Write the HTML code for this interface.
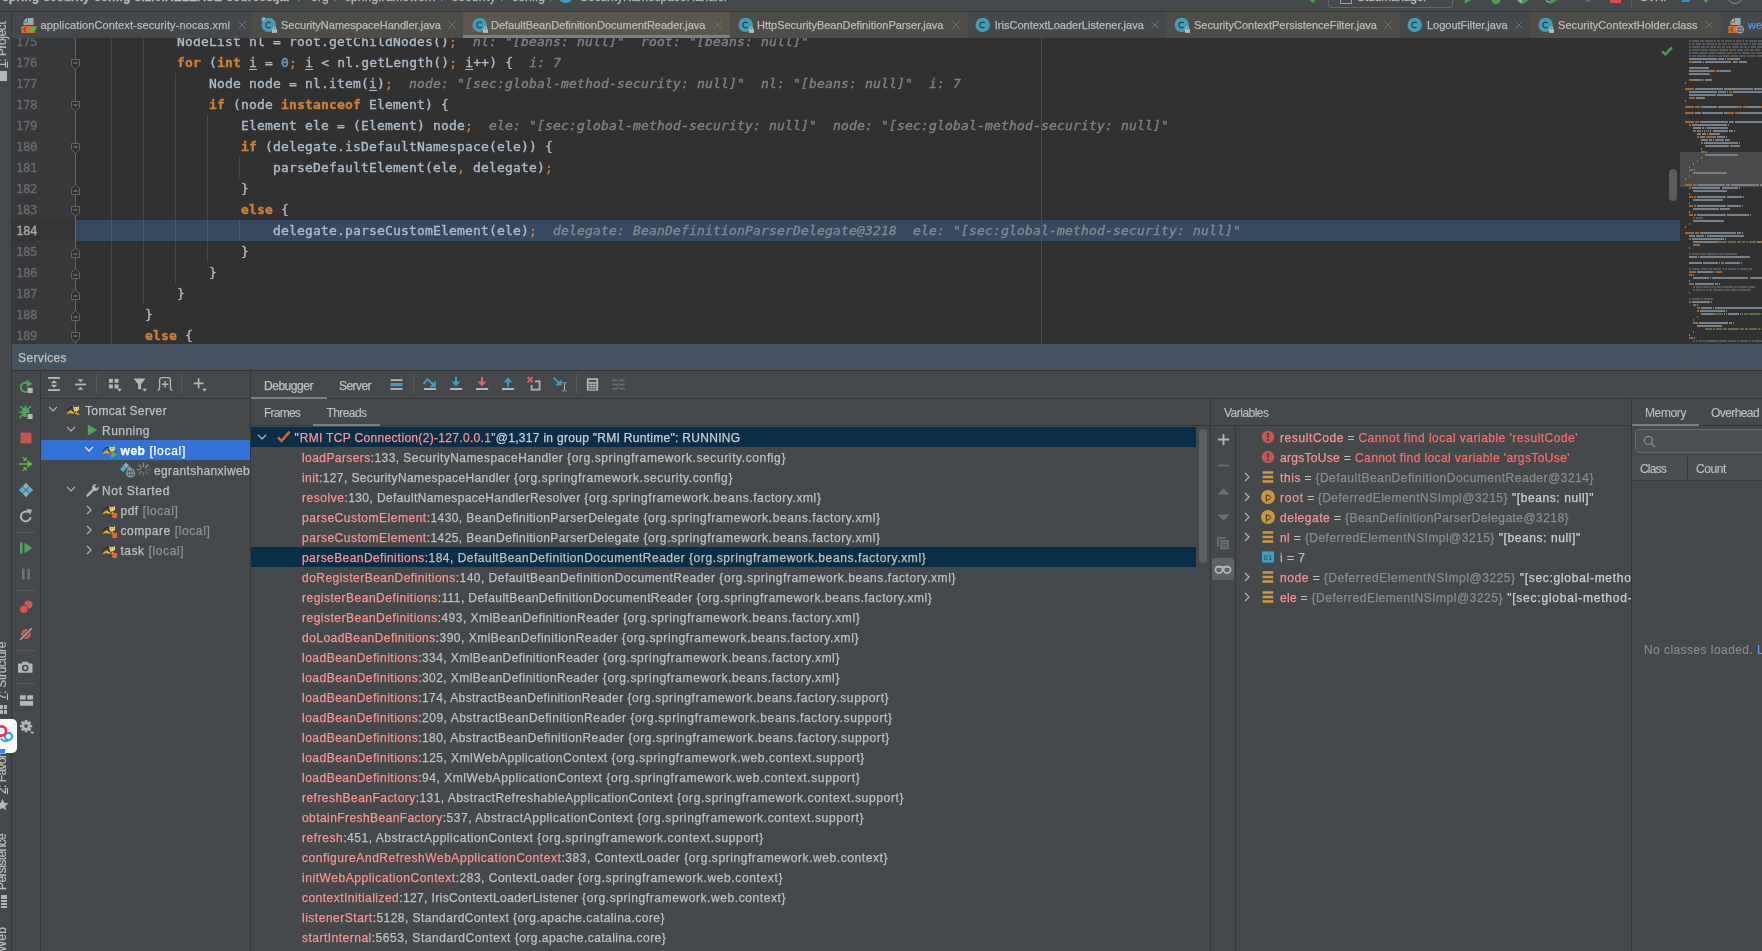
<!DOCTYPE html>
<html lang="en"><head><meta charset="utf-8"><title>IDE debugger</title>
<style>
html,body{margin:0;padding:0;background:#44484a;}
body{width:1762px;height:951px;overflow:hidden;font-family:'Liberation Sans', 'DejaVu Sans', sans-serif;font-size:12px;letter-spacing:0.45px;color:#c0c0c0;}
#root{filter:opacity(1);position:relative;width:1762px;height:951px;overflow:hidden;background:#44484a;}
.t{position:absolute;white-space:pre;-webkit-text-stroke:0.25px;}
.b{position:absolute;display:block;}
svg{overflow:visible;}
.clip{position:absolute;overflow:hidden;}
.cd{-webkit-text-stroke:0.35px;font-family:"DejaVu Sans Mono","Liberation Mono",monospace;font-size:13px;letter-spacing:0.174px;height:21px;line-height:21px;}

</style></head>
<body>
<div id="root">
<div class="b" style="left:0px;top:0px;width:1762px;height:11px;background:#44484a;"></div>
<div class="b" style="left:0px;top:11px;width:1762px;height:1px;background:#35383a;"></div>
<div class="clip" style="left:0;top:0;width:1762px;height:11px">
<div class="t" style="left:2px;top:-10px;font-size:12px;line-height:15px;color:#bbbbbb;font-weight:700;letter-spacing:0.075px;">spring-security-config-3.1.0.RELEASE-sources.jar</div>
<div class="t" style="left:298px;top:-10px;font-size:12px;line-height:15px;color:#8a8d8f;">/</div>
<div class="t" style="left:311px;top:-10px;font-size:12px;line-height:15px;color:#bbbbbb;letter-spacing:0.219px;">org</div>
<div class="t" style="left:334px;top:-10px;font-size:12px;line-height:15px;color:#8a8d8f;">/</div>
<div class="t" style="left:345px;top:-10px;font-size:12px;line-height:15px;color:#bbbbbb;letter-spacing:0.086px;">springframework</div>
<div class="t" style="left:441px;top:-10px;font-size:12px;line-height:15px;color:#8a8d8f;">/</div>
<div class="t" style="left:452px;top:-10px;font-size:12px;line-height:15px;color:#bbbbbb;letter-spacing:0.332px;">security</div>
<div class="t" style="left:501px;top:-10px;font-size:12px;line-height:15px;color:#8a8d8f;">/</div>
<div class="t" style="left:512px;top:-10px;font-size:12px;line-height:15px;color:#bbbbbb;letter-spacing:0.161px;">config</div>
<div class="t" style="left:550px;top:-10px;font-size:12px;line-height:15px;color:#8a8d8f;">/</div>
<div class="t" style="left:580px;top:-10px;font-size:12px;line-height:15px;color:#bbbbbb;letter-spacing:-0.059px;">SecurityNamespaceHandler</div>
<svg class="b" style="left:558px;top:-12px" width="16" height="16" viewBox="0 0 16 16"><circle cx="7.7" cy="7.9" r="7.2" fill="#459cb9"/><path d="M9.7 9.9A2.8 2.8 0 1 1 9.7 6.1" fill="none" stroke="#23424f" stroke-width="1.2"/></svg>
<div class="b" style="left:1328px;top:-16px;width:123px;height:22px;border:1px solid #646769;border-radius:3px"></div>
<div class="t" style="left:1357px;top:-10px;font-size:12px;line-height:15px;color:#bbbbbb;letter-spacing:-0.186px;">StudManager</div>
<div class="b" style="left:1340px;top:-9.5px;width:10px;height:10px;border:1px solid #9aa7b0;border-top:2px solid #4f9fcf"></div>
<svg class="b" style="left:1306px;top:-9.5px" width="14" height="12" viewBox="0 0 14 12"><path d="M1 5L7 10L13 1" fill="none" stroke="#499c54" stroke-width="3"/></svg>
<svg class="b" style="left:1462px;top:-9.5px" width="14" height="14" viewBox="0 0 16 16"><path d="M3.2 1.6L14 8L3.2 14.4Z" fill="#51a25c"/></svg>
<svg class="b" style="left:1487px;top:-9px" width="18" height="14" viewBox="0 0 16 16"><ellipse cx="8" cy="9" rx="5.5" ry="6" fill="#499c54"/></svg>
<svg class="b" style="left:1514px;top:-8.5px" width="20" height="14" viewBox="0 0 20 16"><path d="M1 2C1 10 5 13 8 13V2Z" fill="#9aa7b0"/><path d="M8 3L17 8.5L8 14Z" fill="#499c54"/></svg>
<svg class="b" style="left:1542px;top:-8.5px" width="20" height="14" viewBox="0 0 20 16"><path d="M8 12A5 5 0 0 1 3 7" fill="none" stroke="#9aa7b0" stroke-width="1.6"/><path d="M8 3L17 8.5L8 14Z" fill="#499c54"/></svg>
<svg class="b" style="left:1584px;top:-10px" width="14" height="14" viewBox="0 0 16 16"><path d="M3.2 1.6L14 8L3.2 14.4Z" fill="#6e7072"/></svg>
<div class="b" style="left:1610px;top:-6px;width:11px;height:9px;background:#c75450;"></div>
<div class="b" style="left:1631px;top:0px;width:1px;height:7px;background:#5a5d5f;"></div>
<div class="t" style="left:1640px;top:-10px;font-size:12px;line-height:15px;color:#bbbbbb;letter-spacing:-0.504px;">SVN:</div>
<svg class="b" style="left:1678px;top:-10px" width="12" height="12" viewBox="0 0 12 12"><path d="M1 1L11 11M11 11V4M11 11H4" stroke="#3592c4" stroke-width="2.2" fill="none"/></svg>
<svg class="b" style="left:1700px;top:-9.5px" width="14" height="12" viewBox="0 0 14 12"><path d="M1 5L6 10L13 1" fill="none" stroke="#499c54" stroke-width="2.6"/></svg>
<div class="b" style="left:1727px;top:-12px;width:14px;height:14px;border:1.5px solid #8a8d8f;border-radius:50%"></div>
</div>
<div class="b" style="left:0px;top:12px;width:11px;height:939px;background:#44484a;"></div>
<div class="b" style="left:11px;top:12px;width:1px;height:939px;background:#35383a;"></div>
<div class="clip" style="left:0;top:12px;width:11px;height:939px">
<div class="t" style="left:-5px;top:42px;font-size:12px;line-height:14px;height:14px;color:#bbbbbb;transform-origin:0 100%;transform:rotate(-90deg) translate(0,14px);letter-spacing:-0.47px;"><span style="text-decoration:underline">1</span>: Project</div>
<div class="b" style="left:-4px;top:59px;width:11px;height:10px;background:#b4b6b8;"></div>
<div class="t" style="left:-5px;top:674px;font-size:12px;line-height:14px;height:14px;color:#bbbbbb;transform-origin:0 100%;transform:rotate(-90deg) translate(0,14px);letter-spacing:-0.336px;"><span style="text-decoration:underline">7</span>: Structure</div>
<div class="b" style="left:0px;top:693px;width:3px;height:4px;background:#b4b6b8;"></div>
<div class="b" style="left:4px;top:693px;width:3px;height:4px;background:#b4b6b8;"></div>
<div class="b" style="left:0px;top:698px;width:3px;height:4px;background:#b4b6b8;"></div>
<div class="b" style="left:4px;top:698px;width:3px;height:4px;background:#b4b6b8;"></div>
<div class="t" style="left:-5px;top:768px;font-size:12px;line-height:14px;height:14px;color:#bbbbbb;transform-origin:0 100%;transform:rotate(-90deg) translate(0,14px);letter-spacing:-0.559px;"><span style="text-decoration:underline">2</span>: Favorites</div>
<svg class="b" style="left:-4px;top:786px" width="13" height="13" viewBox="0 0 16 16"><path d="M8 1L10.1 5.9L15.4 6.4L11.4 9.9L12.6 15L8 12.3L3.4 15L4.6 9.9L0.6 6.4L5.9 5.9Z" fill="#b4b6b8"/></svg>
<div class="t" style="left:-5px;top:864px;font-size:12px;line-height:14px;height:14px;color:#bbbbbb;transform-origin:0 100%;transform:rotate(-90deg) translate(0,14px);letter-spacing:-0.609px;">Persistence</div>
<div class="b" style="left:1px;top:883px;width:6px;height:4px;background:#b4b6b8;"></div>
<div class="b" style="left:1px;top:888px;width:6px;height:2px;background:#b4b6b8;"></div>
<div class="b" style="left:1px;top:891px;width:6px;height:2px;background:#b4b6b8;"></div>
<div class="b" style="left:1px;top:894px;width:6px;height:2px;background:#b4b6b8;"></div>
<div class="t" style="left:-5px;top:926px;font-size:12px;line-height:14px;height:14px;color:#bbbbbb;transform-origin:0 100%;transform:rotate(-90deg) translate(0,14px);letter-spacing:0.177px;">Web</div>
</div>
<div class="b" style="left:-6px;top:719px;width:22.6px;height:34px;background:#ffffff;border-radius:5px"></div><div class="b" style="left:0;top:749px;width:5px;height:4px;background:#2a8cf0"></div>
<svg class="b" style="left:-8px;top:722px" width="24" height="28" viewBox="0 0 24 28"><circle cx="16.5" cy="14.5" r="3.6" fill="none" stroke="#2aa5f5" stroke-width="2.2"/><circle cx="9.5" cy="9" r="4.6" fill="none" stroke="#ee2f52" stroke-width="2.6"/><path d="M9 16.5C11 20 15 19.5 16.5 18" fill="none" stroke="#2aa5f5" stroke-width="2.2"/></svg>
<div class="b" style="left:12px;top:12px;width:240px;height:26px;background:#44484a;"></div>
<svg class="b" style="left:20.5px;top:17px;" width="16" height="16" viewBox="0 0 16 16"><path d="M6.4 1H12.6V8H2.4V5Z" fill="#9aa7b0"/><path d="M2.2 4.8L6.2 0.8V4.8Z" fill="#b4c0c8"/><path d="M2.4 5H6.4V1" fill="none" stroke="#44484a" stroke-width="0.7"/><rect x="0.4" y="9" width="13.2" height="7" fill="#dd6b2b"/><path d="M5 10.3L2.6 12.5L5 14.7" fill="none" stroke="#3a2416" stroke-width="0.9"/><path d="M7.8 15.1C6.8 12 9.6 9.6 15.6 9.3C16 13.2 12.8 16.3 7.8 15.1Z" fill="#5fae45"/></svg>
<div class="t" style="left:40.6px;top:17.0px;height:16px;line-height:16px;font-size:11px;color:#bbbbbb;letter-spacing:0.112px;">applicationContext-security-nocas.xml</div>
<svg class="b" style="left:233.5px;top:17px;" width="16" height="16" viewBox="0 0 16 16"><path d="M4.2 4.2L11.8 11.8M11.8 4.2L4.2 11.8" stroke="#6e7275" stroke-width="1" fill="none"/></svg>
<div class="b" style="left:252px;top:12px;width:211px;height:26px;background:#4e4c49;"></div>
<svg class="b" style="left:260.5px;top:17px;" width="16" height="16" viewBox="0 0 16 16"><circle cx="7.7" cy="7.9" r="7.2" fill="#459cb9"/><path d="M9.7 9.9A2.8 2.8 0 1 1 9.7 6.1" fill="none" stroke="#23424f" stroke-width="1.2"/><path d="M-0.2 2.6L2.8 -0.2L5 1.8L2 4.8Z" fill="#9aa7b0"/><path d="M3.6 3.4L5.6 5.2" stroke="#9aa7b0" stroke-width="0.8"/><rect x="10.6" y="11.9" width="5.8" height="4.6" fill="#44484a" opacity="0.0"/><rect x="11" y="12.3" width="5" height="3.6" fill="#b4bcc2"/><path d="M12.3 12.5V10.9a1.2 1.2 0 0 1 2.4 0v1.6" fill="none" stroke="#b4bcc2" stroke-width="1"/></svg>
<div class="t" style="left:281px;top:17.0px;height:16px;line-height:16px;font-size:11px;color:#bbbbbb;letter-spacing:0.014px;">SecurityNamespaceHandler.java</div>
<svg class="b" style="left:444.0px;top:17px;" width="16" height="16" viewBox="0 0 16 16"><path d="M4.2 4.2L11.8 11.8M11.8 4.2L4.2 11.8" stroke="#6e7275" stroke-width="1" fill="none"/></svg>
<div class="b" style="left:463px;top:12px;width:267px;height:26px;background:#5b574d;"></div>
<svg class="b" style="left:471.5px;top:17px;" width="16" height="16" viewBox="0 0 16 16"><circle cx="7.7" cy="7.9" r="7.2" fill="#459cb9"/><path d="M9.7 9.9A2.8 2.8 0 1 1 9.7 6.1" fill="none" stroke="#23424f" stroke-width="1.2"/><rect x="10.6" y="11.9" width="5.8" height="4.6" fill="#44484a" opacity="0.0"/><rect x="11" y="12.3" width="5" height="3.6" fill="#b4bcc2"/><path d="M12.3 12.5V10.9a1.2 1.2 0 0 1 2.4 0v1.6" fill="none" stroke="#b4bcc2" stroke-width="1"/></svg>
<div class="t" style="left:491px;top:17.0px;height:16px;line-height:16px;font-size:11px;color:#bbbbbb;letter-spacing:-0.021px;">DefaultBeanDefinitionDocumentReader.java</div>
<svg class="b" style="left:710.0px;top:17px;" width="16" height="16" viewBox="0 0 16 16"><path d="M4.2 4.2L11.8 11.8M11.8 4.2L4.2 11.8" stroke="#6e7275" stroke-width="1" fill="none"/></svg>
<div class="b" style="left:730px;top:12px;width:238px;height:26px;background:#4e4c49;"></div>
<svg class="b" style="left:737.5px;top:17px;" width="16" height="16" viewBox="0 0 16 16"><circle cx="7.7" cy="7.9" r="7.2" fill="#459cb9"/><path d="M9.7 9.9A2.8 2.8 0 1 1 9.7 6.1" fill="none" stroke="#23424f" stroke-width="1.2"/><rect x="10.6" y="11.9" width="5.8" height="4.6" fill="#44484a" opacity="0.0"/><rect x="11" y="12.3" width="5" height="3.6" fill="#b4bcc2"/><path d="M12.3 12.5V10.9a1.2 1.2 0 0 1 2.4 0v1.6" fill="none" stroke="#b4bcc2" stroke-width="1"/></svg>
<div class="t" style="left:757px;top:17.0px;height:16px;line-height:16px;font-size:11px;color:#bbbbbb;letter-spacing:-0.002px;">HttpSecurityBeanDefinitionParser.java</div>
<svg class="b" style="left:947.5px;top:17px;" width="16" height="16" viewBox="0 0 16 16"><path d="M4.2 4.2L11.8 11.8M11.8 4.2L4.2 11.8" stroke="#6e7275" stroke-width="1" fill="none"/></svg>
<div class="b" style="left:968px;top:12px;width:198px;height:26px;background:#44484a;"></div>
<svg class="b" style="left:974.5px;top:17px;" width="16" height="16" viewBox="0 0 16 16"><circle cx="7.7" cy="7.9" r="7.2" fill="#459cb9"/><path d="M9.7 9.9A2.8 2.8 0 1 1 9.7 6.1" fill="none" stroke="#23424f" stroke-width="1.2"/></svg>
<div class="t" style="left:994.8px;top:17.0px;height:16px;line-height:16px;font-size:11px;color:#bbbbbb;letter-spacing:0.014px;">IrisContextLoaderListener.java</div>
<svg class="b" style="left:1146.8px;top:17px;" width="16" height="16" viewBox="0 0 16 16"><path d="M4.2 4.2L11.8 11.8M11.8 4.2L4.2 11.8" stroke="#6e7275" stroke-width="1" fill="none"/></svg>
<div class="b" style="left:1166px;top:12px;width:234px;height:26px;background:#4e4c49;"></div>
<svg class="b" style="left:1174.0px;top:17px;" width="16" height="16" viewBox="0 0 16 16"><circle cx="7.7" cy="7.9" r="7.2" fill="#459cb9"/><path d="M9.7 9.9A2.8 2.8 0 1 1 9.7 6.1" fill="none" stroke="#23424f" stroke-width="1.2"/><rect x="10.6" y="11.9" width="5.8" height="4.6" fill="#44484a" opacity="0.0"/><rect x="11" y="12.3" width="5" height="3.6" fill="#b4bcc2"/><path d="M12.3 12.5V10.9a1.2 1.2 0 0 1 2.4 0v1.6" fill="none" stroke="#b4bcc2" stroke-width="1"/></svg>
<div class="t" style="left:1194px;top:17.0px;height:16px;line-height:16px;font-size:11px;color:#bbbbbb;letter-spacing:0.022px;">SecurityContextPersistenceFilter.java</div>
<svg class="b" style="left:1379.5px;top:17px;" width="16" height="16" viewBox="0 0 16 16"><path d="M4.2 4.2L11.8 11.8M11.8 4.2L4.2 11.8" stroke="#6e7275" stroke-width="1" fill="none"/></svg>
<div class="b" style="left:1400px;top:12px;width:130px;height:26px;background:#44484a;"></div>
<svg class="b" style="left:1407.0px;top:17px;" width="16" height="16" viewBox="0 0 16 16"><circle cx="7.7" cy="7.9" r="7.2" fill="#459cb9"/><path d="M9.7 9.9A2.8 2.8 0 1 1 9.7 6.1" fill="none" stroke="#23424f" stroke-width="1.2"/></svg>
<div class="t" style="left:1427px;top:17.0px;height:16px;line-height:16px;font-size:11px;color:#bbbbbb;letter-spacing:-0.013px;">LogoutFilter.java</div>
<svg class="b" style="left:1510.5px;top:17px;" width="16" height="16" viewBox="0 0 16 16"><path d="M4.2 4.2L11.8 11.8M11.8 4.2L4.2 11.8" stroke="#6e7275" stroke-width="1" fill="none"/></svg>
<div class="b" style="left:1530px;top:12px;width:191px;height:26px;background:#4e4c49;"></div>
<svg class="b" style="left:1538.0px;top:17px;" width="16" height="16" viewBox="0 0 16 16"><circle cx="7.7" cy="7.9" r="7.2" fill="#459cb9"/><path d="M9.7 9.9A2.8 2.8 0 1 1 9.7 6.1" fill="none" stroke="#23424f" stroke-width="1.2"/><rect x="10.6" y="11.9" width="5.8" height="4.6" fill="#44484a" opacity="0.0"/><rect x="11" y="12.3" width="5" height="3.6" fill="#b4bcc2"/><path d="M12.3 12.5V10.9a1.2 1.2 0 0 1 2.4 0v1.6" fill="none" stroke="#b4bcc2" stroke-width="1"/></svg>
<div class="t" style="left:1558px;top:17.0px;height:16px;line-height:16px;font-size:11px;color:#bbbbbb;letter-spacing:0.075px;">SecurityContextHolder.class</div>
<svg class="b" style="left:1700.5px;top:17px;" width="16" height="16" viewBox="0 0 16 16"><path d="M4.2 4.2L11.8 11.8M11.8 4.2L4.2 11.8" stroke="#6e7275" stroke-width="1" fill="none"/></svg>
<div class="b" style="left:1721px;top:12px;width:41px;height:26px;background:#44484a;"></div>
<svg class="b" style="left:1728.0px;top:17px;" width="16" height="16" viewBox="0 0 16 16"><path d="M6.4 1H12.6V8H2.4V5Z" fill="#9aa7b0"/><path d="M2.2 4.8L6.2 0.8V4.8Z" fill="#b4c0c8"/><path d="M2.4 5H6.4V1" fill="none" stroke="#44484a" stroke-width="0.7"/><rect x="0.4" y="9" width="10" height="7" fill="#dd6b2b"/><path d="M5 10.3L2.6 12.5L5 14.7" fill="none" stroke="#3a2416" stroke-width="0.9"/><circle cx="12" cy="12.5" r="3.4" fill="#44484a" stroke="#9aa7b0" stroke-width="1.1"/><path d="M8.8 12.5H15.2M12 9.3C10.4 11 10.4 14 12 15.7C13.6 14 13.6 11 12 9.3" stroke="#9aa7b0" stroke-width="0.8" fill="none"/></svg>
<div class="t" style="left:1748px;top:17.0px;height:16px;line-height:16px;font-size:11px;color:#5394ec;letter-spacing:-0.049px;">web.xml</div>
<div class="b" style="left:463px;top:35px;width:267px;height:3px;background:#7a8084;"></div>
<div class="clip" style="left:12px;top:38px;width:1750px;height:306px;background:#313131">
<div class="b" style="left:0px;top:0px;width:63px;height:306px;background:#37393b"></div>
<div class="b" style="left:64px;top:182px;width:1604px;height:21px;background:#374961"></div>
<div class="b" style="left:0px;top:182px;width:63px;height:21px;background:#353535"></div>
<div class="b" style="left:1029px;top:0px;width:1px;height:306px;background:#4c4c4c"></div>
<div class="b" style="left:63px;top:0px;width:1px;height:306px;background:#646769"></div>
<div class="b" style="left:99px;top:-28px;width:1px;height:357px;background:#45484a"></div>
<div class="b" style="left:131px;top:-28px;width:1px;height:294px;background:#45484a"></div>
<div class="b" style="left:163px;top:35px;width:1px;height:210px;background:#45484a"></div>
<div class="b" style="left:195px;top:77px;width:1px;height:147px;background:#45484a"></div>
<div class="b" style="left:227px;top:119px;width:1px;height:21px;background:#45484a"></div>
<div class="b" style="left:227px;top:182px;width:1px;height:21px;background:#45484a"></div>
<div class="b" style="left:99px;top:182px;width:1px;height:21px;background:#4a5a73"></div>
<div class="b" style="left:131px;top:182px;width:1px;height:21px;background:#4a5a73"></div>
<div class="b" style="left:163px;top:182px;width:1px;height:21px;background:#4a5a73"></div>
<div class="b" style="left:195px;top:182px;width:1px;height:21px;background:#4a5a73"></div>
<div class="b" style="left:227px;top:182px;width:1px;height:21px;background:#4a5a73"></div>
<div class="t" style="left:3px;top:-6.7px;width:22px;text-align:right;height:21px;line-height:21px;font-family:'DejaVu Sans Mono', 'Liberation Mono', monospace;font-size:12.5px;letter-spacing:-0.55px;-webkit-text-stroke:0.3px;color:#686b6e">175</div>
<div class="t" style="left:3px;top:14.3px;width:22px;text-align:right;height:21px;line-height:21px;font-family:'DejaVu Sans Mono', 'Liberation Mono', monospace;font-size:12.5px;letter-spacing:-0.55px;-webkit-text-stroke:0.3px;color:#686b6e">176</div>
<div class="t" style="left:3px;top:35.3px;width:22px;text-align:right;height:21px;line-height:21px;font-family:'DejaVu Sans Mono', 'Liberation Mono', monospace;font-size:12.5px;letter-spacing:-0.55px;-webkit-text-stroke:0.3px;color:#686b6e">177</div>
<div class="t" style="left:3px;top:56.3px;width:22px;text-align:right;height:21px;line-height:21px;font-family:'DejaVu Sans Mono', 'Liberation Mono', monospace;font-size:12.5px;letter-spacing:-0.55px;-webkit-text-stroke:0.3px;color:#686b6e">178</div>
<div class="t" style="left:3px;top:77.3px;width:22px;text-align:right;height:21px;line-height:21px;font-family:'DejaVu Sans Mono', 'Liberation Mono', monospace;font-size:12.5px;letter-spacing:-0.55px;-webkit-text-stroke:0.3px;color:#686b6e">179</div>
<div class="t" style="left:3px;top:98.3px;width:22px;text-align:right;height:21px;line-height:21px;font-family:'DejaVu Sans Mono', 'Liberation Mono', monospace;font-size:12.5px;letter-spacing:-0.55px;-webkit-text-stroke:0.3px;color:#686b6e">180</div>
<div class="t" style="left:3px;top:119.3px;width:22px;text-align:right;height:21px;line-height:21px;font-family:'DejaVu Sans Mono', 'Liberation Mono', monospace;font-size:12.5px;letter-spacing:-0.55px;-webkit-text-stroke:0.3px;color:#686b6e">181</div>
<div class="t" style="left:3px;top:140.3px;width:22px;text-align:right;height:21px;line-height:21px;font-family:'DejaVu Sans Mono', 'Liberation Mono', monospace;font-size:12.5px;letter-spacing:-0.55px;-webkit-text-stroke:0.3px;color:#686b6e">182</div>
<div class="t" style="left:3px;top:161.3px;width:22px;text-align:right;height:21px;line-height:21px;font-family:'DejaVu Sans Mono', 'Liberation Mono', monospace;font-size:12.5px;letter-spacing:-0.55px;-webkit-text-stroke:0.3px;color:#686b6e">183</div>
<div class="t" style="left:3px;top:182.3px;width:22px;text-align:right;height:21px;line-height:21px;font-family:'DejaVu Sans Mono', 'Liberation Mono', monospace;font-size:12.5px;letter-spacing:-0.55px;-webkit-text-stroke:0.3px;color:#aaa9a9">184</div>
<div class="t" style="left:3px;top:203.3px;width:22px;text-align:right;height:21px;line-height:21px;font-family:'DejaVu Sans Mono', 'Liberation Mono', monospace;font-size:12.5px;letter-spacing:-0.55px;-webkit-text-stroke:0.3px;color:#686b6e">185</div>
<div class="t" style="left:3px;top:224.3px;width:22px;text-align:right;height:21px;line-height:21px;font-family:'DejaVu Sans Mono', 'Liberation Mono', monospace;font-size:12.5px;letter-spacing:-0.55px;-webkit-text-stroke:0.3px;color:#686b6e">186</div>
<div class="t" style="left:3px;top:245.3px;width:22px;text-align:right;height:21px;line-height:21px;font-family:'DejaVu Sans Mono', 'Liberation Mono', monospace;font-size:12.5px;letter-spacing:-0.55px;-webkit-text-stroke:0.3px;color:#686b6e">187</div>
<div class="t" style="left:3px;top:266.3px;width:22px;text-align:right;height:21px;line-height:21px;font-family:'DejaVu Sans Mono', 'Liberation Mono', monospace;font-size:12.5px;letter-spacing:-0.55px;-webkit-text-stroke:0.3px;color:#686b6e">188</div>
<div class="t" style="left:3px;top:287.3px;width:22px;text-align:right;height:21px;line-height:21px;font-family:'DejaVu Sans Mono', 'Liberation Mono', monospace;font-size:12.5px;letter-spacing:-0.55px;-webkit-text-stroke:0.3px;color:#686b6e">189</div>
<svg class="b" style="left:59px;top:21px" width="9" height="11" viewBox="0 0 9 11"><path d="M0.5 0.5H8.5V6.5L4.5 10.5L0.5 6.5Z" fill="#313131" stroke="#646769"/><path d="M2.5 4H6.5" stroke="#8e9193"/></svg>
<svg class="b" style="left:59px;top:63px" width="9" height="11" viewBox="0 0 9 11"><path d="M0.5 0.5H8.5V6.5L4.5 10.5L0.5 6.5Z" fill="#313131" stroke="#646769"/><path d="M2.5 4H6.5" stroke="#8e9193"/></svg>
<svg class="b" style="left:59px;top:105px" width="9" height="11" viewBox="0 0 9 11"><path d="M0.5 0.5H8.5V6.5L4.5 10.5L0.5 6.5Z" fill="#313131" stroke="#646769"/><path d="M2.5 4H6.5" stroke="#8e9193"/></svg>
<svg class="b" style="left:59px;top:146px" width="9" height="11" viewBox="0 0 9 11"><path d="M0.5 10.5H8.5V4.5L4.5 0.5L0.5 4.5Z" fill="#313131" stroke="#646769"/><path d="M2.5 7H6.5" stroke="#8e9193"/></svg>
<svg class="b" style="left:59px;top:168px" width="9" height="11" viewBox="0 0 9 11"><path d="M0.5 0.5H8.5V6.5L4.5 10.5L0.5 6.5Z" fill="#313131" stroke="#646769"/><path d="M2.5 4H6.5" stroke="#8e9193"/></svg>
<svg class="b" style="left:59px;top:209px" width="9" height="11" viewBox="0 0 9 11"><path d="M0.5 10.5H8.5V4.5L4.5 0.5L0.5 4.5Z" fill="#313131" stroke="#646769"/><path d="M2.5 7H6.5" stroke="#8e9193"/></svg>
<svg class="b" style="left:59px;top:230px" width="9" height="11" viewBox="0 0 9 11"><path d="M0.5 10.5H8.5V4.5L4.5 0.5L0.5 4.5Z" fill="#313131" stroke="#646769"/><path d="M2.5 7H6.5" stroke="#8e9193"/></svg>
<svg class="b" style="left:59px;top:251px" width="9" height="11" viewBox="0 0 9 11"><path d="M0.5 10.5H8.5V4.5L4.5 0.5L0.5 4.5Z" fill="#313131" stroke="#646769"/><path d="M2.5 7H6.5" stroke="#8e9193"/></svg>
<svg class="b" style="left:59px;top:272px" width="9" height="11" viewBox="0 0 9 11"><path d="M0.5 10.5H8.5V4.5L4.5 0.5L0.5 4.5Z" fill="#313131" stroke="#646769"/><path d="M2.5 7H6.5" stroke="#8e9193"/></svg>
<svg class="b" style="left:59px;top:294px" width="9" height="11" viewBox="0 0 9 11"><path d="M0.5 0.5H8.5V6.5L4.5 10.5L0.5 6.5Z" fill="#313131" stroke="#646769"/><path d="M2.5 4H6.5" stroke="#8e9193"/></svg>
<div class="t cd" style="left:165px;top:-7px"><span style="color:#afbcca;">NodeList nl = root.getChildNodes()</span><span style="color:#d07f39;">;</span><span style="color:#7e8388;font-style:italic;">  nl: "[beans: null]"  root: "[beans: null]"</span></div>
<div class="t cd" style="left:165px;top:14px"><span style="color:#d07f39;font-weight:700;">for</span><span style="color:#afbcca;"> (</span><span style="color:#d07f39;font-weight:700;">int</span><span style="color:#afbcca;"> </span><span style="color:#afbcca;text-decoration:underline;text-underline-offset:2px;">i</span><span style="color:#afbcca;"> = </span><span style="color:#709dc0;">0</span><span style="color:#d07f39;">;</span><span style="color:#afbcca;"> </span><span style="color:#afbcca;text-decoration:underline;text-underline-offset:2px;">i</span><span style="color:#afbcca;"> &lt; nl.getLength()</span><span style="color:#d07f39;">;</span><span style="color:#afbcca;"> </span><span style="color:#afbcca;text-decoration:underline;text-underline-offset:2px;">i</span><span style="color:#afbcca;">++) {</span><span style="color:#7e8388;font-style:italic;">  i: 7</span></div>
<div class="t cd" style="left:197px;top:35px"><span style="color:#afbcca;">Node node = nl.item(</span><span style="color:#afbcca;text-decoration:underline;text-underline-offset:2px;">i</span><span style="color:#afbcca;">)</span><span style="color:#d07f39;">;</span><span style="color:#7e8388;font-style:italic;">  node: "[sec:global-method-security: null]"  nl: "[beans: null]"  i: 7</span></div>
<div class="t cd" style="left:197px;top:56px"><span style="color:#d07f39;font-weight:700;">if</span><span style="color:#afbcca;"> (node </span><span style="color:#d07f39;font-weight:700;">instanceof</span><span style="color:#afbcca;"> Element) {</span></div>
<div class="t cd" style="left:229px;top:77px"><span style="color:#afbcca;">Element ele = (Element) node</span><span style="color:#d07f39;">;</span><span style="color:#7e8388;font-style:italic;">  ele: "[sec:global-method-security: null]"  node: "[sec:global-method-security: null]"</span></div>
<div class="t cd" style="left:229px;top:98px"><span style="color:#d07f39;font-weight:700;">if</span><span style="color:#afbcca;"> (delegate.isDefaultNamespace(ele)) {</span></div>
<div class="t cd" style="left:261px;top:119px"><span style="color:#afbcca;">parseDefaultElement(ele</span><span style="color:#d07f39;">,</span><span style="color:#afbcca;"> delegate)</span><span style="color:#d07f39;">;</span></div>
<div class="t cd" style="left:229px;top:140px"><span style="color:#afbcca;">}</span></div>
<div class="t cd" style="left:229px;top:161px"><span style="color:#d07f39;font-weight:700;">else</span><span style="color:#afbcca;"> {</span></div>
<div class="t cd" style="left:261px;top:182px"><span style="color:#afbcca;">delegate.parseCustomElement(ele)</span><span style="color:#d07f39;">;</span><span style="color:#808893;font-style:italic;">  delegate: BeanDefinitionParserDelegate@3218  ele: "[sec:global-method-security: null]"</span></div>
<div class="t cd" style="left:229px;top:203px"><span style="color:#afbcca;">}</span></div>
<div class="t cd" style="left:197px;top:224px"><span style="color:#afbcca;">}</span></div>
<div class="t cd" style="left:165px;top:245px"><span style="color:#afbcca;">}</span></div>
<div class="t cd" style="left:133px;top:266px"><span style="color:#afbcca;">}</span></div>
<div class="t cd" style="left:133px;top:287px"><span style="color:#d07f39;font-weight:700;">else</span><span style="color:#afbcca;"> {</span></div>
<div class="b" style="left:1657px;top:131px;width:8px;height:32px;background:#595b5d;border-radius:4px"></div>
<svg class="b" style="left:1649px;top:8px" width="12" height="10" viewBox="0 0 12 10"><path d="M1 5.2L4.4 8.4L11 1.4" fill="none" stroke="#499c54" stroke-width="2.4"/></svg>
<div class="b" style="left:1668px;top:114px;width:82px;height:35px;background:#494949"></div>
<svg class="b" style="left:1673px;top:2px" width="78" height="306" viewBox="0 0 78 306" shape-rendering="crispEdges"><rect x="4" y="0" width="2" height="2" fill="#54585b"/><rect x="7" y="0" width="7" height="2" fill="#54585b"/><rect x="15" y="0" width="4" height="2" fill="#54585b"/><rect x="20" y="0" width="8" height="2" fill="#54585b"/><rect x="29" y="0" width="2" height="2" fill="#54585b"/><rect x="32" y="0" width="3" height="2" fill="#54585b"/><rect x="36" y="0" width="3" height="2" fill="#54585b"/><rect x="40" y="0" width="7" height="2" fill="#54585b"/><rect x="48" y="0" width="2" height="2" fill="#54585b"/><rect x="51" y="0" width="5" height="2" fill="#54585b"/><rect x="57" y="0" width="2" height="2" fill="#54585b"/><rect x="60" y="0" width="3" height="2" fill="#54585b"/><rect x="64" y="0" width="8" height="2" fill="#54585b"/><rect x="73" y="0" width="5" height="2" fill="#54585b"/><rect x="4" y="3" width="2" height="2" fill="#54585b"/><rect x="7" y="3" width="3" height="2" fill="#54585b"/><rect x="11" y="3" width="5" height="2" fill="#54585b"/><rect x="17" y="3" width="3" height="2" fill="#54585b"/><rect x="21" y="3" width="8" height="2" fill="#54585b"/><rect x="30" y="3" width="2" height="2" fill="#54585b"/><rect x="33" y="3" width="3" height="2" fill="#54585b"/><rect x="37" y="3" width="5" height="2" fill="#54585b"/><rect x="43" y="3" width="2" height="2" fill="#54585b"/><rect x="46" y="3" width="8" height="2" fill="#54585b"/><rect x="55" y="3" width="2" height="2" fill="#54585b"/><rect x="58" y="3" width="5" height="2" fill="#54585b"/><rect x="64" y="3" width="2" height="2" fill="#54585b"/><rect x="67" y="3" width="4" height="2" fill="#54585b"/><rect x="72" y="3" width="6" height="2" fill="#54585b"/><rect x="4" y="6" width="2" height="2" fill="#54585b"/><rect x="7" y="6" width="8" height="2" fill="#54585b"/><rect x="16" y="6" width="4" height="2" fill="#54585b"/><rect x="21" y="6" width="3" height="2" fill="#54585b"/><rect x="25" y="6" width="6" height="2" fill="#54585b"/><rect x="32" y="6" width="4" height="2" fill="#54585b"/><rect x="37" y="6" width="3" height="2" fill="#54585b"/><rect x="41" y="6" width="5" height="2" fill="#54585b"/><rect x="47" y="6" width="7" height="2" fill="#54585b"/><rect x="55" y="6" width="3" height="2" fill="#54585b"/><rect x="59" y="6" width="3" height="2" fill="#54585b"/><rect x="63" y="6" width="2" height="2" fill="#54585b"/><rect x="66" y="6" width="5" height="2" fill="#54585b"/><rect x="72" y="6" width="6" height="2" fill="#54585b"/><rect x="4" y="9" width="2" height="2" fill="#54585b"/><rect x="7" y="9" width="8" height="2" fill="#54585b"/><rect x="16" y="9" width="7" height="2" fill="#54585b"/><rect x="24" y="9" width="9" height="2" fill="#54585b"/><rect x="34" y="9" width="9" height="2" fill="#54585b"/><rect x="44" y="9" width="7" height="2" fill="#54585b"/><rect x="52" y="9" width="6" height="2" fill="#54585b"/><rect x="59" y="9" width="5" height="2" fill="#54585b"/><rect x="65" y="9" width="4" height="2" fill="#54585b"/><rect x="70" y="9" width="5" height="2" fill="#54585b"/><rect x="76" y="9" width="2" height="2" fill="#54585b"/><rect x="4" y="12" width="2" height="2" fill="#54585b"/><rect x="7" y="12" width="6" height="2" fill="#54585b"/><rect x="14" y="12" width="9" height="2" fill="#54585b"/><rect x="24" y="12" width="7" height="2" fill="#54585b"/><rect x="32" y="12" width="9" height="2" fill="#54585b"/><rect x="42" y="12" width="6" height="2" fill="#54585b"/><rect x="49" y="12" width="3" height="2" fill="#54585b"/><rect x="53" y="12" width="3" height="2" fill="#54585b"/><rect x="57" y="12" width="8" height="2" fill="#54585b"/><rect x="66" y="12" width="4" height="2" fill="#54585b"/><rect x="71" y="12" width="7" height="2" fill="#54585b"/><rect x="4" y="15" width="2" height="2" fill="#54585b"/><rect x="7" y="15" width="4" height="2" fill="#54585b"/><rect x="12" y="15" width="9" height="2" fill="#54585b"/><rect x="22" y="15" width="8" height="2" fill="#54585b"/><rect x="31" y="15" width="2" height="2" fill="#54585b"/><rect x="34" y="15" width="3" height="2" fill="#54585b"/><rect x="38" y="15" width="7" height="2" fill="#54585b"/><rect x="46" y="15" width="7" height="2" fill="#54585b"/><rect x="54" y="15" width="7" height="2" fill="#54585b"/><rect x="62" y="15" width="9" height="2" fill="#54585b"/><rect x="72" y="15" width="6" height="2" fill="#54585b"/><rect x="4" y="18" width="28" height="2" fill="#77818b"/><rect x="33" y="18" width="6" height="2" fill="#77818b"/><rect x="40" y="18" width="1" height="2" fill="#77818b"/><rect x="42" y="18" width="4" height="2" fill="#a5652f"/><rect x="46" y="18" width="9" height="2" fill="#77818b"/><rect x="4" y="21" width="4" height="2" fill="#a5652f"/><rect x="8" y="21" width="9" height="2" fill="#77818b"/><rect x="18" y="21" width="1" height="2" fill="#77818b"/><rect x="20" y="21" width="26" height="2" fill="#77818b"/><rect x="48" y="21" width="4" height="2" fill="#77818b"/><rect x="52" y="21" width="1" height="2" fill="#a5652f"/><rect x="54" y="21" width="7" height="2" fill="#77818b"/><rect x="61" y="21" width="1" height="2" fill="#a5652f"/><rect x="4" y="27" width="19" height="2" fill="#77818b"/><rect x="23" y="27" width="1" height="2" fill="#a5652f"/><rect x="4" y="30" width="25" height="2" fill="#77818b"/><rect x="29" y="30" width="1" height="2" fill="#a5652f"/><rect x="31" y="30" width="4" height="2" fill="#a5652f"/><rect x="35" y="30" width="10" height="2" fill="#77818b"/><rect x="45" y="30" width="1" height="2" fill="#a5652f"/><rect x="4" y="33" width="20" height="2" fill="#77818b"/><rect x="24" y="33" width="1" height="2" fill="#a5652f"/><rect x="4" y="39" width="4" height="2" fill="#a5652f"/><rect x="8" y="39" width="9" height="2" fill="#77818b"/><rect x="18" y="39" width="1" height="2" fill="#77818b"/><rect x="20" y="39" width="6" height="2" fill="#77818b"/><rect x="26" y="39" width="1" height="2" fill="#a5652f"/><rect x="0" y="42" width="1" height="2" fill="#77818b"/><rect x="0" y="48" width="9" height="2" fill="#a5652f"/><rect x="10" y="48" width="28" height="2" fill="#77818b"/><rect x="39" y="48" width="29" height="2" fill="#77818b"/><rect x="69" y="48" width="9" height="2" fill="#77818b"/><rect x="4" y="51" width="28" height="2" fill="#77818b"/><rect x="33" y="51" width="8" height="2" fill="#77818b"/><rect x="42" y="51" width="1" height="2" fill="#77818b"/><rect x="44" y="51" width="3" height="2" fill="#a5652f"/><rect x="48" y="51" width="30" height="2" fill="#77818b"/><rect x="4" y="54" width="26" height="2" fill="#77818b"/><rect x="30" y="54" width="1" height="2" fill="#a5652f"/><rect x="32" y="54" width="15" height="2" fill="#77818b"/><rect x="47" y="54" width="1" height="2" fill="#a5652f"/><rect x="4" y="57" width="6" height="2" fill="#a5652f"/><rect x="11" y="57" width="8" height="2" fill="#77818b"/><rect x="19" y="57" width="1" height="2" fill="#a5652f"/><rect x="0" y="60" width="1" height="2" fill="#77818b"/><rect x="0" y="66" width="9" height="2" fill="#a5652f"/><rect x="10" y="66" width="5" height="2" fill="#a5652f"/><rect x="16" y="66" width="16" height="2" fill="#77818b"/><rect x="33" y="66" width="18" height="2" fill="#77818b"/><rect x="51" y="66" width="6" height="2" fill="#a5652f"/><rect x="58" y="66" width="4" height="2" fill="#a5652f"/><rect x="62" y="66" width="14" height="2" fill="#77818b"/><rect x="76" y="66" width="1" height="2" fill="#a5652f"/><rect x="0" y="72" width="9" height="2" fill="#a5652f"/><rect x="10" y="72" width="6" height="2" fill="#77818b"/><rect x="17" y="72" width="21" height="2" fill="#77818b"/><rect x="39" y="72" width="4" height="2" fill="#77818b"/><rect x="43" y="72" width="6" height="2" fill="#a5652f"/><rect x="50" y="72" width="4" height="2" fill="#a5652f"/><rect x="54" y="72" width="24" height="2" fill="#77818b"/><rect x="0" y="81" width="9" height="2" fill="#a5652f"/><rect x="10" y="81" width="4" height="2" fill="#a5652f"/><rect x="15" y="81" width="28" height="2" fill="#77818b"/><rect x="44" y="81" width="4" height="2" fill="#77818b"/><rect x="48" y="81" width="1" height="2" fill="#a5652f"/><rect x="50" y="81" width="28" height="2" fill="#77818b"/><rect x="4" y="84" width="2" height="2" fill="#a5652f"/><rect x="7" y="84" width="35" height="2" fill="#77818b"/><rect x="43" y="84" width="1" height="2" fill="#77818b"/><rect x="8" y="87" width="8" height="2" fill="#77818b"/><rect x="17" y="87" width="2" height="2" fill="#77818b"/><rect x="20" y="87" width="1" height="2" fill="#77818b"/><rect x="22" y="87" width="20" height="2" fill="#77818b"/><rect x="42" y="87" width="1" height="2" fill="#a5652f"/><rect x="8" y="90" width="3" height="2" fill="#a5652f"/><rect x="12" y="90" width="1" height="2" fill="#77818b"/><rect x="13" y="90" width="3" height="2" fill="#a5652f"/><rect x="17" y="90" width="1" height="2" fill="#77818b"/><rect x="19" y="90" width="1" height="2" fill="#77818b"/><rect x="21" y="90" width="1" height="2" fill="#a5652f"/><rect x="23" y="90" width="1" height="2" fill="#77818b"/><rect x="25" y="90" width="1" height="2" fill="#77818b"/><rect x="28" y="90" width="14" height="2" fill="#77818b"/><rect x="42" y="90" width="1" height="2" fill="#a5652f"/><rect x="44" y="90" width="4" height="2" fill="#77818b"/><rect x="49" y="90" width="1" height="2" fill="#77818b"/><rect x="12" y="93" width="4" height="2" fill="#77818b"/><rect x="17" y="93" width="4" height="2" fill="#77818b"/><rect x="22" y="93" width="1" height="2" fill="#77818b"/><rect x="24" y="93" width="10" height="2" fill="#77818b"/><rect x="34" y="93" width="1" height="2" fill="#a5652f"/><rect x="12" y="96" width="2" height="2" fill="#a5652f"/><rect x="15" y="96" width="5" height="2" fill="#77818b"/><rect x="21" y="96" width="10" height="2" fill="#a5652f"/><rect x="32" y="96" width="8" height="2" fill="#77818b"/><rect x="41" y="96" width="1" height="2" fill="#77818b"/><rect x="16" y="99" width="7" height="2" fill="#77818b"/><rect x="24" y="99" width="3" height="2" fill="#77818b"/><rect x="28" y="99" width="1" height="2" fill="#77818b"/><rect x="30" y="99" width="9" height="2" fill="#77818b"/><rect x="40" y="99" width="4" height="2" fill="#77818b"/><rect x="44" y="99" width="1" height="2" fill="#a5652f"/><rect x="16" y="102" width="2" height="2" fill="#a5652f"/><rect x="19" y="102" width="34" height="2" fill="#77818b"/><rect x="54" y="102" width="1" height="2" fill="#77818b"/><rect x="20" y="105" width="23" height="2" fill="#77818b"/><rect x="43" y="105" width="1" height="2" fill="#a5652f"/><rect x="45" y="105" width="9" height="2" fill="#77818b"/><rect x="54" y="105" width="1" height="2" fill="#a5652f"/><rect x="16" y="108" width="1" height="2" fill="#77818b"/><rect x="16" y="111" width="4" height="2" fill="#a5652f"/><rect x="21" y="111" width="1" height="2" fill="#77818b"/><rect x="20" y="114" width="32" height="2" fill="#77818b"/><rect x="52" y="114" width="1" height="2" fill="#a5652f"/><rect x="16" y="117" width="1" height="2" fill="#77818b"/><rect x="12" y="120" width="1" height="2" fill="#77818b"/><rect x="8" y="123" width="1" height="2" fill="#77818b"/><rect x="4" y="126" width="1" height="2" fill="#77818b"/><rect x="4" y="129" width="4" height="2" fill="#a5652f"/><rect x="9" y="129" width="1" height="2" fill="#77818b"/><rect x="8" y="132" width="33" height="2" fill="#77818b"/><rect x="41" y="132" width="1" height="2" fill="#a5652f"/><rect x="4" y="135" width="1" height="2" fill="#77818b"/><rect x="0" y="138" width="1" height="2" fill="#77818b"/><rect x="0" y="144" width="7" height="2" fill="#a5652f"/><rect x="8" y="144" width="4" height="2" fill="#a5652f"/><rect x="13" y="144" width="27" height="2" fill="#77818b"/><rect x="41" y="144" width="4" height="2" fill="#77818b"/><rect x="46" y="144" width="28" height="2" fill="#77818b"/><rect x="75" y="144" width="3" height="2" fill="#77818b"/><rect x="4" y="147" width="2" height="2" fill="#a5652f"/><rect x="7" y="147" width="28" height="2" fill="#77818b"/><rect x="37" y="147" width="16" height="2" fill="#77818b"/><rect x="54" y="147" width="1" height="2" fill="#77818b"/><rect x="8" y="150" width="33" height="2" fill="#77818b"/><rect x="41" y="150" width="1" height="2" fill="#a5652f"/><rect x="4" y="153" width="1" height="2" fill="#77818b"/><rect x="4" y="156" width="4" height="2" fill="#a5652f"/><rect x="9" y="156" width="2" height="2" fill="#a5652f"/><rect x="12" y="156" width="28" height="2" fill="#77818b"/><rect x="40" y="156" width="1" height="2" fill="#a5652f"/><rect x="42" y="156" width="15" height="2" fill="#77818b"/><rect x="58" y="156" width="1" height="2" fill="#77818b"/><rect x="8" y="159" width="29" height="2" fill="#77818b"/><rect x="37" y="159" width="1" height="2" fill="#a5652f"/><rect x="4" y="162" width="1" height="2" fill="#77818b"/><rect x="4" y="165" width="4" height="2" fill="#a5652f"/><rect x="9" y="165" width="2" height="2" fill="#a5652f"/><rect x="12" y="165" width="28" height="2" fill="#77818b"/><rect x="40" y="165" width="1" height="2" fill="#a5652f"/><rect x="42" y="165" width="14" height="2" fill="#77818b"/><rect x="57" y="165" width="1" height="2" fill="#77818b"/><rect x="8" y="168" width="25" height="2" fill="#77818b"/><rect x="33" y="168" width="1" height="2" fill="#a5652f"/><rect x="35" y="168" width="9" height="2" fill="#77818b"/><rect x="44" y="168" width="1" height="2" fill="#a5652f"/><rect x="4" y="171" width="1" height="2" fill="#77818b"/><rect x="4" y="174" width="4" height="2" fill="#a5652f"/><rect x="9" y="174" width="2" height="2" fill="#a5652f"/><rect x="12" y="174" width="28" height="2" fill="#77818b"/><rect x="40" y="174" width="1" height="2" fill="#a5652f"/><rect x="42" y="174" width="22" height="2" fill="#77818b"/><rect x="65" y="174" width="1" height="2" fill="#77818b"/><rect x="8" y="177" width="2" height="2" fill="#54585b"/><rect x="11" y="177" width="7" height="2" fill="#54585b"/><rect x="8" y="180" width="30" height="2" fill="#77818b"/><rect x="38" y="180" width="1" height="2" fill="#a5652f"/><rect x="4" y="183" width="1" height="2" fill="#77818b"/><rect x="0" y="186" width="1" height="2" fill="#77818b"/><rect x="0" y="192" width="9" height="2" fill="#a5652f"/><rect x="10" y="192" width="4" height="2" fill="#a5652f"/><rect x="15" y="192" width="36" height="2" fill="#77818b"/><rect x="52" y="192" width="4" height="2" fill="#77818b"/><rect x="57" y="192" width="1" height="2" fill="#77818b"/><rect x="4" y="195" width="6" height="2" fill="#77818b"/><rect x="11" y="195" width="8" height="2" fill="#77818b"/><rect x="20" y="195" width="1" height="2" fill="#77818b"/><rect x="22" y="195" width="36" height="2" fill="#77818b"/><rect x="58" y="195" width="1" height="2" fill="#a5652f"/><rect x="4" y="198" width="2" height="2" fill="#a5652f"/><rect x="7" y="198" width="32" height="2" fill="#77818b"/><rect x="40" y="198" width="1" height="2" fill="#77818b"/><rect x="8" y="201" width="25" height="2" fill="#77818b"/><rect x="33" y="201" width="9" height="2" fill="#5b7048"/><rect x="43" y="201" width="8" height="2" fill="#5b7048"/><rect x="52" y="201" width="4" height="2" fill="#5b7048"/><rect x="57" y="201" width="3" height="2" fill="#5b7048"/><rect x="61" y="201" width="2" height="2" fill="#5b7048"/><rect x="64" y="201" width="6" height="2" fill="#5b7048"/><rect x="70" y="201" width="1" height="2" fill="#a5652f"/><rect x="72" y="201" width="4" height="2" fill="#77818b"/><rect x="76" y="201" width="1" height="2" fill="#a5652f"/><rect x="8" y="204" width="7" height="2" fill="#a5652f"/><rect x="4" y="207" width="1" height="2" fill="#77818b"/><rect x="4" y="213" width="2" height="2" fill="#54585b"/><rect x="7" y="213" width="7" height="2" fill="#54585b"/><rect x="15" y="213" width="6" height="2" fill="#54585b"/><rect x="22" y="213" width="11" height="2" fill="#54585b"/><rect x="34" y="213" width="4" height="2" fill="#54585b"/><rect x="39" y="213" width="13" height="2" fill="#54585b"/><rect x="4" y="216" width="8" height="2" fill="#77818b"/><rect x="13" y="216" width="1" height="2" fill="#77818b"/><rect x="15" y="216" width="49" height="2" fill="#77818b"/><rect x="64" y="216" width="1" height="2" fill="#a5652f"/><rect x="4" y="222" width="13" height="2" fill="#77818b"/><rect x="18" y="222" width="15" height="2" fill="#77818b"/><rect x="34" y="222" width="1" height="2" fill="#77818b"/><rect x="36" y="222" width="3" height="2" fill="#a5652f"/><rect x="40" y="222" width="15" height="2" fill="#77818b"/><rect x="56" y="222" width="1" height="2" fill="#a5652f"/><rect x="4" y="228" width="2" height="2" fill="#54585b"/><rect x="7" y="228" width="8" height="2" fill="#54585b"/><rect x="16" y="228" width="7" height="2" fill="#54585b"/><rect x="24" y="228" width="3" height="2" fill="#54585b"/><rect x="28" y="228" width="8" height="2" fill="#54585b"/><rect x="37" y="228" width="2" height="2" fill="#54585b"/><rect x="40" y="228" width="2" height="2" fill="#54585b"/><rect x="43" y="228" width="8" height="2" fill="#54585b"/><rect x="52" y="228" width="2" height="2" fill="#54585b"/><rect x="55" y="228" width="8" height="2" fill="#54585b"/><rect x="64" y="228" width="3" height="2" fill="#54585b"/><rect x="4" y="231" width="7" height="2" fill="#a5652f"/><rect x="12" y="231" width="16" height="2" fill="#77818b"/><rect x="29" y="231" width="1" height="2" fill="#77818b"/><rect x="31" y="231" width="6" height="2" fill="#a5652f"/><rect x="4" y="234" width="3" height="2" fill="#a5652f"/><rect x="8" y="234" width="1" height="2" fill="#77818b"/><rect x="8" y="237" width="16" height="2" fill="#77818b"/><rect x="25" y="237" width="1" height="2" fill="#77818b"/><rect x="27" y="237" width="36" height="2" fill="#77818b"/><rect x="65" y="237" width="2" height="2" fill="#77818b"/><rect x="67" y="237" width="11" height="2" fill="#77818b"/><rect x="4" y="240" width="1" height="2" fill="#77818b"/><rect x="4" y="243" width="5" height="2" fill="#a5652f"/><rect x="10" y="243" width="19" height="2" fill="#77818b"/><rect x="30" y="243" width="3" height="2" fill="#77818b"/><rect x="34" y="243" width="1" height="2" fill="#77818b"/><rect x="8" y="246" width="2" height="2" fill="#54585b"/><rect x="11" y="246" width="6" height="2" fill="#54585b"/><rect x="18" y="246" width="7" height="2" fill="#54585b"/><rect x="26" y="246" width="2" height="2" fill="#54585b"/><rect x="29" y="246" width="2" height="2" fill="#54585b"/><rect x="32" y="246" width="4" height="2" fill="#54585b"/><rect x="37" y="246" width="11" height="2" fill="#54585b"/><rect x="49" y="246" width="3" height="2" fill="#54585b"/><rect x="53" y="246" width="9" height="2" fill="#54585b"/><rect x="63" y="246" width="7" height="2" fill="#54585b"/><rect x="8" y="249" width="2" height="2" fill="#54585b"/><rect x="11" y="249" width="6" height="2" fill="#54585b"/><rect x="18" y="249" width="2" height="2" fill="#54585b"/><rect x="21" y="249" width="2" height="2" fill="#54585b"/><rect x="24" y="249" width="3" height="2" fill="#54585b"/><rect x="28" y="249" width="10" height="2" fill="#54585b"/><rect x="39" y="249" width="6" height="2" fill="#54585b"/><rect x="46" y="249" width="6" height="2" fill="#54585b"/><rect x="53" y="249" width="13" height="2" fill="#54585b"/><rect x="4" y="252" width="1" height="2" fill="#77818b"/><rect x="4" y="258" width="2" height="2" fill="#54585b"/><rect x="7" y="258" width="8" height="2" fill="#54585b"/><rect x="16" y="258" width="2" height="2" fill="#54585b"/><rect x="19" y="258" width="9" height="2" fill="#54585b"/><rect x="4" y="261" width="2" height="2" fill="#a5652f"/><rect x="7" y="261" width="18" height="2" fill="#77818b"/><rect x="26" y="261" width="1" height="2" fill="#77818b"/><rect x="8" y="264" width="3" height="2" fill="#a5652f"/><rect x="12" y="264" width="1" height="2" fill="#77818b"/><rect x="12" y="267" width="3" height="2" fill="#a5652f"/><rect x="16" y="267" width="11" height="2" fill="#77818b"/><rect x="28" y="267" width="1" height="2" fill="#77818b"/><rect x="30" y="267" width="48" height="2" fill="#77818b"/><rect x="12" y="270" width="2" height="2" fill="#a5652f"/><rect x="15" y="270" width="25" height="2" fill="#77818b"/><rect x="41" y="270" width="1" height="2" fill="#77818b"/><rect x="16" y="273" width="13" height="2" fill="#77818b"/><rect x="29" y="273" width="9" height="2" fill="#5b7048"/><rect x="39" y="273" width="1" height="2" fill="#77818b"/><rect x="41" y="273" width="1" height="2" fill="#77818b"/><rect x="43" y="273" width="11" height="2" fill="#77818b"/><rect x="55" y="273" width="1" height="2" fill="#77818b"/><rect x="57" y="273" width="1" height="2" fill="#77818b"/><rect x="59" y="273" width="4" height="2" fill="#5b7048"/><rect x="64" y="273" width="11" height="2" fill="#5b7048"/><rect x="76" y="273" width="2" height="2" fill="#5b7048"/><rect x="12" y="276" width="1" height="2" fill="#77818b"/><rect x="8" y="279" width="1" height="2" fill="#77818b"/><rect x="8" y="282" width="5" height="2" fill="#a5652f"/><rect x="14" y="282" width="29" height="2" fill="#77818b"/><rect x="44" y="282" width="3" height="2" fill="#77818b"/><rect x="48" y="282" width="1" height="2" fill="#77818b"/><rect x="12" y="285" width="25" height="2" fill="#77818b"/><rect x="20" y="288" width="7" height="2" fill="#5b7048"/><rect x="28" y="288" width="2" height="2" fill="#5b7048"/><rect x="31" y="288" width="6" height="2" fill="#5b7048"/><rect x="38" y="288" width="4" height="2" fill="#5b7048"/><rect x="43" y="288" width="11" height="2" fill="#5b7048"/><rect x="55" y="288" width="4" height="2" fill="#5b7048"/><rect x="60" y="288" width="3" height="2" fill="#5b7048"/><rect x="64" y="288" width="8" height="2" fill="#5b7048"/><rect x="73" y="288" width="2" height="2" fill="#5b7048"/><rect x="76" y="288" width="2" height="2" fill="#5b7048"/><rect x="8" y="291" width="1" height="2" fill="#77818b"/><rect x="4" y="294" width="1" height="2" fill="#77818b"/><rect x="4" y="297" width="4" height="2" fill="#a5652f"/><rect x="9" y="297" width="1" height="2" fill="#77818b"/><rect x="8" y="300" width="2" height="2" fill="#54585b"/><rect x="11" y="300" width="2" height="2" fill="#54585b"/><rect x="14" y="300" width="3" height="2" fill="#54585b"/><rect x="18" y="300" width="2" height="2" fill="#54585b"/><rect x="21" y="300" width="12" height="2" fill="#54585b"/><rect x="34" y="300" width="8" height="2" fill="#54585b"/><rect x="43" y="300" width="8" height="2" fill="#54585b"/><rect x="52" y="300" width="2" height="2" fill="#54585b"/><rect x="55" y="300" width="8" height="2" fill="#54585b"/><rect x="64" y="300" width="2" height="2" fill="#54585b"/><rect x="67" y="300" width="2" height="2" fill="#54585b"/><rect x="70" y="300" width="8" height="2" fill="#54585b"/></svg>
</div>
<div class="b" style="left:12px;top:344px;width:1750px;height:26px;background:#45525f;"></div>
<div class="b" style="left:12px;top:370px;width:1750px;height:1px;background:#35383a;"></div>
<div class="t" style="left:18px;top:347.6px;height:20px;line-height:20px;font-size:12px;color:#c0c0c0;letter-spacing:0.373px;">Services</div>
<div class="b" style="left:40px;top:371px;width:1px;height:580px;background:#35383a;"></div>
<svg class="b" style="left:19.0px;top:378.5px;" width="15" height="15" viewBox="0 0 16 16"><path d="M8.6 13.4A4.9 4.9 0 1 1 9.2 4.6" fill="none" stroke="#51a25c" stroke-width="2.1"/><path d="M8.2 0.6L14.2 5.2L8.2 8.6Z" fill="#51a25c"/><rect x="9" y="9.4" width="5.6" height="5.6" fill="#b4b6b8"/></svg>
<svg class="b" style="left:17.7px;top:404.0px;" width="16" height="16" viewBox="0 0 16 16"><ellipse cx="7.6" cy="8.2" rx="3.9" ry="5" fill="#51a25c"/><path d="M2.4 2.4L5.2 5M12.8 2.4L10 5M0.8 8.2H4M1.4 13.6L4.4 11.2M7.6 1.6V4" stroke="#51a25c" stroke-width="1.5" fill="none"/><rect x="8.6" y="9" width="6.6" height="6.6" fill="#44484a"/><rect x="9.6" y="10" width="5" height="5" fill="#b4b6b8"/></svg>
<svg class="b" style="left:17.7px;top:430.0px;" width="16" height="16" viewBox="0 0 16 16"><rect x="2.6" y="2.6" width="10.8" height="10.8" fill="#c75450"/></svg>
<svg class="b" style="left:17.7px;top:456.0px;" width="16" height="16" viewBox="0 0 16 16"><path d="M0.8 8H11" stroke="#62b543" stroke-width="1.6"/><path d="M9.4 4.2L14.8 8L9.4 11.8Z" fill="#62b543"/><path d="M4.6 1L8 4.4M8 4.4V1.6M8 4.4H5.2M4.6 15L8 11.6M8 11.6V14.4M8 11.6H5.2" stroke="#62b543" stroke-width="1.3" fill="none"/></svg>
<svg class="b" style="left:17.7px;top:482.0px;" width="16" height="16" viewBox="0 0 16 16"><path d="M8 0.8L11.4 4.2L8 7.6L4.6 4.2Z" fill="#9aa7b0"/><path d="M8 8.4L11.4 11.8L8 15.2L4.6 11.8Z" fill="#9aa7b0"/><path d="M4.2 4.6L7.6 8L4.2 11.4L0.8 8Z" fill="#40b6e0"/><path d="M11.8 4.6L15.2 8L11.8 11.4L8.4 8Z" fill="#40b6e0"/></svg>
<svg class="b" style="left:17.7px;top:508.0px;" width="16" height="16" viewBox="0 0 16 16"><path d="M12.6 9.2A4.9 4.9 0 1 1 10.2 4.2" fill="none" stroke="#b4b6b8" stroke-width="1.9"/><path d="M8.4 1L14 1.6L12.2 7Z" fill="#b4b6b8"/></svg>
<div class="b" style="left:16px;top:532px;width:20px;height:1px;background:#55585a;"></div>
<svg class="b" style="left:17.7px;top:540.0px;" width="16" height="16" viewBox="0 0 16 16"><rect x="2" y="2.4" width="2.6" height="11.2" fill="#51a25c"/><path d="M6.4 2.4L14.4 8L6.4 13.6Z" fill="#51a25c"/></svg>
<svg class="b" style="left:17.7px;top:566.0px;" width="16" height="16" viewBox="0 0 16 16"><rect x="4" y="2.6" width="2.6" height="10.8" fill="#6e7072"/><rect x="9.4" y="2.6" width="2.6" height="10.8" fill="#6e7072"/></svg>
<div class="b" style="left:16px;top:590px;width:20px;height:1px;background:#55585a;"></div>
<svg class="b" style="left:17.5px;top:599.0px;" width="16" height="16" viewBox="0 0 16 16"><circle cx="10.4" cy="5.6" r="4.2" fill="#cc5852"/><circle cx="5.8" cy="10.2" r="4.6" fill="#44484a"/><circle cx="5.8" cy="10.2" r="3.8" fill="#cc5852"/></svg>
<svg class="b" style="left:17.5px;top:625.5px;" width="16" height="16" viewBox="0 0 16 16"><circle cx="8" cy="8" r="5" fill="#cc5852"/><path d="M2 14L14 2" stroke="#44484a" stroke-width="3"/><path d="M2.2 13.8L13.8 2.2" stroke="#b4b6b8" stroke-width="1.3"/></svg>
<div class="b" style="left:16px;top:650px;width:20px;height:1px;background:#55585a;"></div>
<svg class="b" style="left:17.45px;top:658.75px;" width="16.5" height="16.5" viewBox="0 0 16 16"><path d="M1 4.4H4.4L5.6 2.6H10.4L11.6 4.4H15V13.4H1Z" fill="#b4b6b8"/><circle cx="8" cy="8.8" r="3.2" fill="#44484a"/><circle cx="8" cy="8.8" r="1.7" fill="#b4b6b8"/></svg>
<div class="b" style="left:16px;top:683px;width:20px;height:1px;background:#55585a;"></div>
<svg class="b" style="left:18.5px;top:692.5px;" width="15" height="15" viewBox="0 0 16 16"><rect x="1" y="2.4" width="6.2" height="4.6" fill="#b4b6b8"/><rect x="8.8" y="2.4" width="6.2" height="4.6" fill="#b4b6b8"/><rect x="1" y="8.6" width="14" height="5" fill="#b4b6b8"/></svg>
<svg class="b" style="left:19.5px;top:719.5px;" width="15" height="15" viewBox="0 0 16 16"><circle cx="11.70" cy="6.50" r="1.55" fill="#b4b6b8"/><circle cx="10.18" cy="10.18" r="1.55" fill="#b4b6b8"/><circle cx="6.50" cy="11.70" r="1.55" fill="#b4b6b8"/><circle cx="2.82" cy="10.18" r="1.55" fill="#b4b6b8"/><circle cx="1.30" cy="6.50" r="1.55" fill="#b4b6b8"/><circle cx="2.82" cy="2.82" r="1.55" fill="#b4b6b8"/><circle cx="6.50" cy="1.30" r="1.55" fill="#b4b6b8"/><circle cx="10.18" cy="2.82" r="1.55" fill="#b4b6b8"/><circle cx="6.5" cy="6.5" r="4.6" fill="#b4b6b8"/><circle cx="6.5" cy="6.5" r="1.9" fill="#44484a"/><path d="M10.6 12.6H15.6L13.1 15.2Z" fill="#b4b6b8"/></svg>
<div class="b" style="left:41px;top:398px;width:209px;height:1px;background:#35383a;"></div>
<svg class="b" style="left:45.5px;top:375.5px;" width="16" height="16" viewBox="0 0 16 16"><rect x="2" y="1" width="12" height="1.8" fill="#b4b6b8"/><rect x="2" y="13.2" width="12" height="1.8" fill="#b4b6b8"/><path d="M8 4.2L11.2 7.2H4.8Z" fill="#b4b6b8"/><path d="M8 11.8L11.2 8.8H4.8Z" fill="#b4b6b8"/></svg>
<svg class="b" style="left:72.5px;top:376.5px;" width="15" height="15" viewBox="0 0 16 16"><rect x="2" y="7.1" width="12" height="1.8" fill="#b4b6b8"/><path d="M8 5.6L11.2 2.4H4.8Z" fill="#b4b6b8"/><path d="M8 10.4L11.2 13.6H4.8Z" fill="#b4b6b8"/></svg>
<div class="b" style="left:96px;top:374px;width:1px;height:20px;background:#55585a;"></div>
<svg class="b" style="left:107.5px;top:377.0px;" width="15" height="15" viewBox="0 0 16 16"><rect x="1" y="2" width="4.2" height="4.2" fill="#b4b6b8"/><rect x="7" y="2" width="4.2" height="4.2" fill="#b4b6b8"/><rect x="1" y="8" width="4.2" height="4.2" fill="#b4b6b8"/><rect x="7" y="8" width="4.2" height="4.2" fill="#b4b6b8"/><path d="M9.6 12.6H15L12.3 15.4Z" fill="#b4b6b8"/></svg>
<svg class="b" style="left:132.5px;top:377.0px;" width="15" height="15" viewBox="0 0 16 16"><path d="M0.6 1.6H13.4L8.6 7.6V13H5.4V7.6Z" fill="#b4b6b8"/><path d="M9.8 12.6H15.2L12.5 15.4Z" fill="#b4b6b8"/></svg>
<svg class="b" style="left:157.0px;top:376.0px;" width="16" height="16" viewBox="0 0 16 16"><path d="M0.6 14.4C2.6 14.4 2.6 12.6 2.6 11V4.2C2.6 2.4 3.6 1.6 5 1.6H11C12.4 1.6 13.4 2.4 13.4 4.2V11C13.4 12.6 13.4 14.4 15.4 14.4" fill="none" stroke="#b4b6b8" stroke-width="1.3"/><path d="M8 5V11.4M4.8 8.2H11.2" stroke="#b4b6b8" stroke-width="1.5"/></svg>
<div class="b" style="left:181px;top:374px;width:1px;height:20px;background:#55585a;"></div>
<svg class="b" style="left:192.5px;top:377.0px;" width="15" height="15" viewBox="0 0 16 16"><path d="M6 1.4V12M0.8 6.7H11.2" stroke="#b4b6b8" stroke-width="1.8"/><path d="M9.6 12.6H15L12.3 15.4Z" fill="#b4b6b8"/></svg>
<div class="b" style="left:250px;top:371px;width:1px;height:580px;background:#35383a;"></div>
<div class="clip" style="left:41px;top:398px;width:209px;height:553px">
<div class="b" style="left:0;top:42px;width:209px;height:20px;background:#3272d6"></div>
</div>
<svg class="b" style="left:46.0px;top:402.0px;" width="14" height="14" viewBox="0 0 16 16"><path d="M3.4 5.6L8 10.2L12.6 5.6" fill="none" stroke="#b4b6b8" stroke-width="1.3"/></svg>
<svg class="b" style="left:66px;top:403px;" width="16" height="16" viewBox="0 0 16 16"><path d="M1.6 8.2C1.8 6 3.6 4.4 6.6 4.2" fill="none" stroke="#1f1f1f" stroke-width="1"/><path d="M0.3 11.8C1.2 9.6 2.6 8.2 4.4 7.6C6.2 7 8.2 7.4 10 8.6C11.6 9.7 13 10.9 13.9 12.1C12 11.6 10.2 11.2 8.4 10.9C6.4 10.6 4.6 10 3.4 10.2C2.2 10.4 1.2 11 0.3 11.8Z" fill="#e8a81c"/><path d="M5.8 6.6L7.8 8.8M9.6 9L8.2 10.6" stroke="#1f1f1f" stroke-width="1.1"/><path d="M7.7 2.2L9 3.9H11.5L12.9 2.2L13.1 5.6C13.1 7.3 11.9 8.3 10.3 8.3C8.7 8.3 7.5 7.3 7.5 5.6Z" fill="#ecd98a"/><path d="M8.1 2.9L9 4.3M12.5 2.9L11.6 4.3" stroke="#3a3320" stroke-width="0.6"/><circle cx="9.4" cy="5.7" r="0.55" fill="#6b5a1e"/><circle cx="11.3" cy="5.7" r="0.55" fill="#6b5a1e"/></svg>
<div class="t" style="left:85px;top:400.6px;height:20px;line-height:20px;font-size:12px;color:#c0c0c0;letter-spacing:0.357px;">Tomcat Server</div>
<svg class="b" style="left:64.0px;top:422.0px;" width="14" height="14" viewBox="0 0 16 16"><path d="M3.4 5.6L8 10.2L12.6 5.6" fill="none" stroke="#b4b6b8" stroke-width="1.3"/></svg>
<svg class="b" style="left:84.5px;top:423.0px;" width="14" height="14" viewBox="0 0 16 16"><path d="M3.2 1.6L14 8L3.2 14.4Z" fill="#51a25c"/></svg>
<div class="t" style="left:102px;top:420.6px;height:20px;line-height:20px;font-size:12px;color:#c0c0c0;letter-spacing:0.471px;">Running</div>
<svg class="b" style="left:82.0px;top:442.0px;" width="14" height="14" viewBox="0 0 16 16"><path d="M3.4 5.6L8 10.2L12.6 5.6" fill="none" stroke="#ffffff" stroke-width="1.3"/></svg>
<svg class="b" style="left:102px;top:443px;" width="16" height="16" viewBox="0 0 16 16"><path d="M1.6 8.2C1.8 6 3.6 4.4 6.6 4.2" fill="none" stroke="#1f1f1f" stroke-width="1"/><path d="M0.3 11.8C1.2 9.6 2.6 8.2 4.4 7.6C6.2 7 8.2 7.4 10 8.6C11.6 9.7 13 10.9 13.9 12.1C12 11.6 10.2 11.2 8.4 10.9C6.4 10.6 4.6 10 3.4 10.2C2.2 10.4 1.2 11 0.3 11.8Z" fill="#e8a81c"/><path d="M5.8 6.6L7.8 8.8M9.6 9L8.2 10.6" stroke="#1f1f1f" stroke-width="1.1"/><path d="M7.7 2.2L9 3.9H11.5L12.9 2.2L13.1 5.6C13.1 7.3 11.9 8.3 10.3 8.3C8.7 8.3 7.5 7.3 7.5 5.6Z" fill="#ecd98a"/><path d="M8.1 2.9L9 4.3M12.5 2.9L11.6 4.3" stroke="#3a3320" stroke-width="0.6"/><circle cx="9.4" cy="5.7" r="0.55" fill="#6b5a1e"/><circle cx="11.3" cy="5.7" r="0.55" fill="#6b5a1e"/><path d="M9.3 8.3L15.3 11.7L9.3 15.1Z" fill="#62b543"/></svg>
<div class="t" style="left:120.5px;top:440.6px;height:20px;line-height:20px;font-size:12px;"><span style="color:#ffffff;letter-spacing:0.552px;font-weight:700;">web</span><span style="color:#ffffff;letter-spacing:0.727px;"> [local]</span></div>
<div class="clip" style="left:41px;top:460px;width:209px;height:20px">
<svg class="b" style="left:79px;top:2px" width="16" height="16" viewBox="0 0 16 16"><path d="M6 0.6L9 3.6L6 6.6L3 3.6Z" fill="#9aa7b0"/><path d="M3 4L6 7L3 10L0 7Z" fill="#40b6e0"/><path d="M9.4 4L11.4 6L9 8.4L6.6 6.4Z" fill="#40b6e0" opacity="0.8"/><circle cx="10.6" cy="11" r="3.9" fill="#44484a" stroke="#9aa7b0" stroke-width="1.1"/><path d="M7 11H14.2M10.6 7.2C8.8 9.2 8.8 12.8 10.6 14.8C12.4 12.8 12.4 9.2 10.6 7.2" stroke="#9aa7b0" stroke-width="0.8" fill="none"/></svg>
<svg class="b" style="left:95px;top:2px" width="15" height="15" viewBox="0 0 16 16"><path d="M11.20 8.00L14.60 8.00" stroke="#9ea1a3" stroke-width="1.5" stroke-linecap="round" opacity="0.25"/><path d="M10.26 10.26L12.67 12.67" stroke="#9ea1a3" stroke-width="1.5" stroke-linecap="round" opacity="0.34"/><path d="M8.00 11.20L8.00 14.60" stroke="#9ea1a3" stroke-width="1.5" stroke-linecap="round" opacity="0.43"/><path d="M5.74 10.26L3.33 12.67" stroke="#9ea1a3" stroke-width="1.5" stroke-linecap="round" opacity="0.52"/><path d="M4.80 8.00L1.40 8.00" stroke="#9ea1a3" stroke-width="1.5" stroke-linecap="round" opacity="0.61"/><path d="M5.74 5.74L3.33 3.33" stroke="#9ea1a3" stroke-width="1.5" stroke-linecap="round" opacity="0.70"/><path d="M8.00 4.80L8.00 1.40" stroke="#9ea1a3" stroke-width="1.5" stroke-linecap="round" opacity="0.79"/><path d="M10.26 5.74L12.67 3.33" stroke="#9ea1a3" stroke-width="1.5" stroke-linecap="round" opacity="0.88"/></svg>
<div class="t" style="left:113px;top:0.6px;height:20px;line-height:20px;color:#c0c0c0;letter-spacing:0.351px">egrantshanxiweb:war exploded</div>
</div>
<svg class="b" style="left:64.0px;top:482.0px;" width="14" height="14" viewBox="0 0 16 16"><path d="M3.4 5.6L8 10.2L12.6 5.6" fill="none" stroke="#b4b6b8" stroke-width="1.3"/></svg>
<svg class="b" style="left:84.5px;top:482.5px;" width="15" height="15" viewBox="0 0 16 16"><path d="M1.6 12.6L7.8 6.4A3.6 3.6 0 0 1 12.4 1.6L10.2 3.8L12.2 5.8L14.4 3.6A3.6 3.6 0 0 1 9.6 8.2L3.4 14.4A1.27 1.27 0 0 1 1.6 12.6Z" fill="#b4b6b8"/></svg>
<div class="t" style="left:102px;top:480.6px;height:20px;line-height:20px;font-size:12px;color:#c0c0c0;letter-spacing:0.663px;">Not Started</div>
<svg class="b" style="left:81.5px;top:503.0px;" width="14" height="14" viewBox="0 0 16 16"><path d="M5.8 3.4L10.4 8L5.8 12.6" fill="none" stroke="#b4b6b8" stroke-width="1.3"/></svg>
<svg class="b" style="left:102px;top:503px;" width="16" height="16" viewBox="0 0 16 16"><path d="M1.6 8.2C1.8 6 3.6 4.4 6.6 4.2" fill="none" stroke="#1f1f1f" stroke-width="1"/><path d="M0.3 11.8C1.2 9.6 2.6 8.2 4.4 7.6C6.2 7 8.2 7.4 10 8.6C11.6 9.7 13 10.9 13.9 12.1C12 11.6 10.2 11.2 8.4 10.9C6.4 10.6 4.6 10 3.4 10.2C2.2 10.4 1.2 11 0.3 11.8Z" fill="#e8a81c"/><path d="M5.8 6.6L7.8 8.8M9.6 9L8.2 10.6" stroke="#1f1f1f" stroke-width="1.1"/><path d="M7.7 2.2L9 3.9H11.5L12.9 2.2L13.1 5.6C13.1 7.3 11.9 8.3 10.3 8.3C8.7 8.3 7.5 7.3 7.5 5.6Z" fill="#ecd98a"/><path d="M8.1 2.9L9 4.3M12.5 2.9L11.6 4.3" stroke="#3a3320" stroke-width="0.6"/><circle cx="9.4" cy="5.7" r="0.55" fill="#6b5a1e"/><circle cx="11.3" cy="5.7" r="0.55" fill="#6b5a1e"/><rect x="10.3" y="10" width="4.8" height="5" fill="#f26522"/></svg>
<div class="t" style="left:120.5px;top:500.6px;height:20px;line-height:20px;font-size:12px;"><span style="color:#c0c0c0;letter-spacing:0.504px;">pdf</span><span style="color:#8f9294;letter-spacing:0.627px;"> [local]</span></div>
<svg class="b" style="left:81.5px;top:523.0px;" width="14" height="14" viewBox="0 0 16 16"><path d="M5.8 3.4L10.4 8L5.8 12.6" fill="none" stroke="#b4b6b8" stroke-width="1.3"/></svg>
<svg class="b" style="left:102px;top:523px;" width="16" height="16" viewBox="0 0 16 16"><path d="M1.6 8.2C1.8 6 3.6 4.4 6.6 4.2" fill="none" stroke="#1f1f1f" stroke-width="1"/><path d="M0.3 11.8C1.2 9.6 2.6 8.2 4.4 7.6C6.2 7 8.2 7.4 10 8.6C11.6 9.7 13 10.9 13.9 12.1C12 11.6 10.2 11.2 8.4 10.9C6.4 10.6 4.6 10 3.4 10.2C2.2 10.4 1.2 11 0.3 11.8Z" fill="#e8a81c"/><path d="M5.8 6.6L7.8 8.8M9.6 9L8.2 10.6" stroke="#1f1f1f" stroke-width="1.1"/><path d="M7.7 2.2L9 3.9H11.5L12.9 2.2L13.1 5.6C13.1 7.3 11.9 8.3 10.3 8.3C8.7 8.3 7.5 7.3 7.5 5.6Z" fill="#ecd98a"/><path d="M8.1 2.9L9 4.3M12.5 2.9L11.6 4.3" stroke="#3a3320" stroke-width="0.6"/><circle cx="9.4" cy="5.7" r="0.55" fill="#6b5a1e"/><circle cx="11.3" cy="5.7" r="0.55" fill="#6b5a1e"/><rect x="10.3" y="10" width="4.8" height="5" fill="#f26522"/></svg>
<div class="t" style="left:120.5px;top:520.6px;height:20px;line-height:20px;font-size:12px;"><span style="color:#c0c0c0;letter-spacing:0.502px;">compare</span><span style="color:#8f9294;letter-spacing:0.627px;"> [local]</span></div>
<svg class="b" style="left:81.5px;top:543.0px;" width="14" height="14" viewBox="0 0 16 16"><path d="M5.8 3.4L10.4 8L5.8 12.6" fill="none" stroke="#b4b6b8" stroke-width="1.3"/></svg>
<svg class="b" style="left:102px;top:543px;" width="16" height="16" viewBox="0 0 16 16"><path d="M1.6 8.2C1.8 6 3.6 4.4 6.6 4.2" fill="none" stroke="#1f1f1f" stroke-width="1"/><path d="M0.3 11.8C1.2 9.6 2.6 8.2 4.4 7.6C6.2 7 8.2 7.4 10 8.6C11.6 9.7 13 10.9 13.9 12.1C12 11.6 10.2 11.2 8.4 10.9C6.4 10.6 4.6 10 3.4 10.2C2.2 10.4 1.2 11 0.3 11.8Z" fill="#e8a81c"/><path d="M5.8 6.6L7.8 8.8M9.6 9L8.2 10.6" stroke="#1f1f1f" stroke-width="1.1"/><path d="M7.7 2.2L9 3.9H11.5L12.9 2.2L13.1 5.6C13.1 7.3 11.9 8.3 10.3 8.3C8.7 8.3 7.5 7.3 7.5 5.6Z" fill="#ecd98a"/><path d="M8.1 2.9L9 4.3M12.5 2.9L11.6 4.3" stroke="#3a3320" stroke-width="0.6"/><circle cx="9.4" cy="5.7" r="0.55" fill="#6b5a1e"/><circle cx="11.3" cy="5.7" r="0.55" fill="#6b5a1e"/><rect x="10.3" y="10" width="4.8" height="5" fill="#f26522"/></svg>
<div class="t" style="left:120.5px;top:540.6px;height:20px;line-height:20px;font-size:12px;"><span style="color:#c0c0c0;letter-spacing:0.496px;">task</span><span style="color:#8f9294;letter-spacing:0.627px;"> [local]</span></div>
<div class="b" style="left:251px;top:398px;width:1511px;height:1px;background:#35383a;"></div>
<div class="t" style="left:264px;top:375.6px;height:20px;line-height:20px;font-size:12px;color:#c0c0c0;letter-spacing:-0.465px;">Debugger</div>
<div class="b" style="left:251px;top:397px;width:76px;height:2px;background:#7a8084;"></div>
<div class="t" style="left:339px;top:375.6px;height:20px;line-height:20px;font-size:12px;color:#c0c0c0;letter-spacing:-0.557px;">Server</div>
<svg class="b" style="left:389.0px;top:376.5px;" width="15" height="15" viewBox="0 0 16 16"><rect x="1.6" y="2.4" width="12.8" height="1.9" fill="#b4b6b8"/><rect x="1.6" y="6.4" width="12.8" height="3.4" fill="#3c99c8"/><rect x="1.6" y="11.8" width="12.8" height="1.9" fill="#b4b6b8"/></svg>
<div class="b" style="left:413px;top:374px;width:1px;height:20px;background:#55585a;"></div>
<svg class="b" style="left:421.5px;top:376.0px;" width="16" height="16" viewBox="0 0 16 16"><path d="M1.4 8L5.6 3.2L12.4 9.8" fill="none" stroke="#3c99c8" stroke-width="1.9"/><path d="M13.8 4.6V11.2H7.2Z" fill="#3c99c8"/><rect x="2" y="12" width="12.2" height="2" fill="#b4b6b8"/></svg>
<svg class="b" style="left:447.5px;top:376.0px;" width="16" height="16" viewBox="0 0 16 16"><path d="M8 0.8V7" stroke="#3c99c8" stroke-width="2"/><path d="M3.6 5.6H12.4L8 10.6Z" fill="#3c99c8"/><rect x="2" y="12" width="12.2" height="2" fill="#b4b6b8"/></svg>
<svg class="b" style="left:473.5px;top:376.0px;" width="16" height="16" viewBox="0 0 16 16"><path d="M8 0.8V7" stroke="#de6068" stroke-width="2"/><path d="M3.6 5.6H12.4L8 10.6Z" fill="#de6068"/><rect x="2" y="12" width="12.2" height="2" fill="#b4b6b8"/></svg>
<svg class="b" style="left:499.5px;top:376.0px;" width="16" height="16" viewBox="0 0 16 16"><path d="M8 11V4.6" stroke="#3c99c8" stroke-width="2"/><path d="M3.6 6.2H12.4L8 1.2Z" fill="#3c99c8"/><rect x="2" y="12" width="12.2" height="2" fill="#b4b6b8"/></svg>
<svg class="b" style="left:525.5px;top:376.0px;" width="16" height="16" viewBox="0 0 16 16"><path d="M1.6 1.2L6.8 6.4M6.8 1.2L1.6 6.4" stroke="#de6068" stroke-width="1.9"/><path d="M9 5.4H13.6V13.6H5.6V9" fill="none" stroke="#b4b6b8" stroke-width="1.7"/></svg>
<svg class="b" style="left:552.0px;top:376.0px;" width="16" height="16" viewBox="0 0 16 16"><path d="M1.6 1.6L7.6 7.6" stroke="#3c99c8" stroke-width="2"/><path d="M9.6 3.2V9.6H3.2Z" fill="#3c99c8"/><path d="M10.4 6.6H11.8M13.2 6.6H14.6M12.5 7V14.6M10.4 15H11.8M13.2 15H14.6" stroke="#b4b6b8" stroke-width="1" fill="none"/></svg>
<div class="b" style="left:576px;top:374px;width:1px;height:20px;background:#55585a;"></div>
<svg class="b" style="left:585.0px;top:376.5px;" width="15" height="15" viewBox="0 0 16 16"><rect x="2" y="1.4" width="12" height="13.2" fill="#b4b6b8"/><rect x="3.8" y="3.2" width="8.4" height="2.2" fill="#44484a"/><rect x="3.8" y="7.0" width="2.2" height="1.5" fill="#44484a"/><rect x="6.9" y="7.0" width="2.2" height="1.5" fill="#44484a"/><rect x="10.0" y="7.0" width="2.2" height="1.5" fill="#44484a"/><rect x="3.8" y="9.5" width="2.2" height="1.5" fill="#44484a"/><rect x="6.9" y="9.5" width="2.2" height="1.5" fill="#44484a"/><rect x="10.0" y="9.5" width="2.2" height="1.5" fill="#44484a"/><rect x="3.8" y="12.0" width="2.2" height="1.5" fill="#44484a"/><rect x="6.9" y="12.0" width="2.2" height="1.5" fill="#44484a"/><rect x="10.0" y="12.0" width="2.2" height="1.5" fill="#44484a"/></svg>
<svg class="b" style="left:611.0px;top:376.5px;" width="15" height="15" viewBox="0 0 16 16"><rect x="1.4" y="2.6" width="5.6" height="1.8" fill="#6a6d6f"/><rect x="9" y="2.6" width="5.6" height="1.8" fill="#6a6d6f"/><rect x="1.4" y="7.1" width="5.6" height="1.8" fill="#6a6d6f"/><rect x="9" y="7.1" width="5.6" height="1.8" fill="#6a6d6f"/><rect x="1.4" y="11.6" width="5.6" height="1.8" fill="#6a6d6f"/><rect x="9" y="11.6" width="5.6" height="1.8" fill="#6a6d6f"/><path d="M6.4 12.4C8 10 7.6 6 9.4 3.6" stroke="#6a6d6f" stroke-width="0.9" fill="none"/></svg>
<div class="t" style="left:264px;top:402.6px;height:20px;line-height:20px;font-size:12px;color:#c0c0c0;letter-spacing:-0.779px;-webkit-text-stroke:0.1px;">Frames</div>
<div class="t" style="left:326.5px;top:402.6px;height:20px;line-height:20px;font-size:12px;color:#c0c0c0;letter-spacing:-0.576px;-webkit-text-stroke:0.1px;">Threads</div>
<div class="b" style="left:251px;top:425px;width:960px;height:1px;background:#35383a;"></div>
<div class="b" style="left:313px;top:424px;width:67px;height:2px;background:#7a8084;"></div>
<div class="b" style="left:251px;top:427px;width:945px;height:20px;background:#0a2e48;"></div>
<div class="b" style="left:251px;top:547px;width:945px;height:20px;background:#0a2e48;"></div>
<svg class="b" style="left:255.0px;top:429.5px;" width="14" height="14" viewBox="0 0 16 16"><path d="M3.4 5.6L8 10.2L12.6 5.6" fill="none" stroke="#c5c8ca" stroke-width="1.5"/></svg>
<svg class="b" style="left:275.7px;top:429.0px;" width="15" height="15" viewBox="0 0 16 16"><path d="M2 9L5.8 12.8L14.6 2.8" fill="none" stroke="#cf6a2d" stroke-width="2.6"/></svg>
<div class="t" style="left:294.5px;top:427.6px;height:20px;line-height:20px;font-size:12px;"><span style="color:#cdd1d5;letter-spacing:0.934px;">"</span><span style="color:#ff9292;letter-spacing:0.318px;">RMI TCP Connection(2)-127.0.0.1</span><span style="color:#cdd1d5;letter-spacing:0.295px;">"@1,317 in group "RMI Runtime": RUNNING</span></div>
<div class="t" style="left:302px;top:447.6px;height:20px;line-height:20px;font-size:12px;"><span style="color:#ff9292;letter-spacing:0.424px;">loadParsers</span><span style="color:#c0c0c0;letter-spacing:0.437px;">:133, SecurityNamespaceHandler </span><span style="color:#c0c0c0;letter-spacing:0.607px;">{org.springframework.security.config}</span></div>
<div class="t" style="left:302px;top:467.6px;height:20px;line-height:20px;font-size:12px;"><span style="color:#ff9292;letter-spacing:0.414px;">init</span><span style="color:#c0c0c0;letter-spacing:0.395px;">:127, SecurityNamespaceHandler </span><span style="color:#c0c0c0;letter-spacing:0.607px;">{org.springframework.security.config}</span></div>
<div class="t" style="left:302px;top:487.6px;height:20px;line-height:20px;font-size:12px;"><span style="color:#ff9292;letter-spacing:0.545px;">resolve</span><span style="color:#c0c0c0;letter-spacing:0.395px;">:130, DefaultNamespaceHandlerResolver </span><span style="color:#c0c0c0;letter-spacing:0.598px;">{org.springframework.beans.factory.xml}</span></div>
<div class="t" style="left:302px;top:507.6px;height:20px;line-height:20px;font-size:12px;"><span style="color:#ff9292;letter-spacing:0.517px;">parseCustomElement</span><span style="color:#c0c0c0;letter-spacing:0.423px;">:1430, BeanDefinitionParserDelegate </span><span style="color:#c0c0c0;letter-spacing:0.596px;">{org.springframework.beans.factory.xml}</span></div>
<div class="t" style="left:302px;top:527.6px;height:20px;line-height:20px;font-size:12px;"><span style="color:#ff9292;letter-spacing:0.517px;">parseCustomElement</span><span style="color:#c0c0c0;letter-spacing:0.423px;">:1425, BeanDefinitionParserDelegate </span><span style="color:#c0c0c0;letter-spacing:0.596px;">{org.springframework.beans.factory.xml}</span></div>
<div class="t" style="left:302px;top:547.6px;height:20px;line-height:20px;font-size:12px;"><span style="color:#ff9292;letter-spacing:0.431px;">parseBeanDefinitions</span><span style="color:#c0c0c0;letter-spacing:0.496px;">:184, DefaultBeanDefinitionDocumentReader </span><span style="color:#c0c0c0;letter-spacing:0.601px;">{org.springframework.beans.factory.xml}</span></div>
<div class="t" style="left:302px;top:567.6px;height:20px;line-height:20px;font-size:12px;"><span style="color:#ff9292;letter-spacing:0.464px;">doRegisterBeanDefinitions</span><span style="color:#c0c0c0;letter-spacing:0.479px;">:140, DefaultBeanDefinitionDocumentReader </span><span style="color:#c0c0c0;letter-spacing:0.585px;">{org.springframework.beans.factory.xml}</span></div>
<div class="t" style="left:302px;top:587.6px;height:20px;line-height:20px;font-size:12px;"><span style="color:#ff9292;letter-spacing:0.505px;">registerBeanDefinitions</span><span style="color:#c0c0c0;letter-spacing:0.405px;">:111, DefaultBeanDefinitionDocumentReader </span><span style="color:#c0c0c0;letter-spacing:0.567px;">{org.springframework.beans.factory.xml}</span></div>
<div class="t" style="left:302px;top:607.6px;height:20px;line-height:20px;font-size:12px;"><span style="color:#ff9292;letter-spacing:0.505px;">registerBeanDefinitions</span><span style="color:#c0c0c0;letter-spacing:0.462px;">:493, XmlBeanDefinitionReader </span><span style="color:#c0c0c0;letter-spacing:0.601px;">{org.springframework.beans.factory.xml}</span></div>
<div class="t" style="left:302px;top:627.6px;height:20px;line-height:20px;font-size:12px;"><span style="color:#ff9292;letter-spacing:0.457px;">doLoadBeanDefinitions</span><span style="color:#c0c0c0;letter-spacing:0.489px;">:390, XmlBeanDefinitionReader </span><span style="color:#c0c0c0;letter-spacing:0.598px;">{org.springframework.beans.factory.xml}</span></div>
<div class="t" style="left:302px;top:647.6px;height:20px;line-height:20px;font-size:12px;"><span style="color:#ff9292;letter-spacing:0.497px;">loadBeanDefinitions</span><span style="color:#c0c0c0;letter-spacing:0.439px;">:334, XmlBeanDefinitionReader </span><span style="color:#c0c0c0;letter-spacing:0.598px;">{org.springframework.beans.factory.xml}</span></div>
<div class="t" style="left:302px;top:667.6px;height:20px;line-height:20px;font-size:12px;"><span style="color:#ff9292;letter-spacing:0.497px;">loadBeanDefinitions</span><span style="color:#c0c0c0;letter-spacing:0.439px;">:302, XmlBeanDefinitionReader </span><span style="color:#c0c0c0;letter-spacing:0.598px;">{org.springframework.beans.factory.xml}</span></div>
<div class="t" style="left:302px;top:687.6px;height:20px;line-height:20px;font-size:12px;"><span style="color:#ff9292;letter-spacing:0.497px;">loadBeanDefinitions</span><span style="color:#c0c0c0;letter-spacing:0.431px;">:174, AbstractBeanDefinitionReader </span><span style="color:#c0c0c0;letter-spacing:0.618px;">{org.springframework.beans.factory.support}</span></div>
<div class="t" style="left:302px;top:707.6px;height:20px;line-height:20px;font-size:12px;"><span style="color:#ff9292;letter-spacing:0.497px;">loadBeanDefinitions</span><span style="color:#c0c0c0;letter-spacing:0.516px;">:209, AbstractBeanDefinitionReader </span><span style="color:#c0c0c0;letter-spacing:0.629px;">{org.springframework.beans.factory.support}</span></div>
<div class="t" style="left:302px;top:727.6px;height:20px;line-height:20px;font-size:12px;"><span style="color:#ff9292;letter-spacing:0.497px;">loadBeanDefinitions</span><span style="color:#c0c0c0;letter-spacing:0.456px;">:180, AbstractBeanDefinitionReader </span><span style="color:#c0c0c0;letter-spacing:0.615px;">{org.springframework.beans.factory.support}</span></div>
<div class="t" style="left:302px;top:747.6px;height:20px;line-height:20px;font-size:12px;"><span style="color:#ff9292;letter-spacing:0.497px;">loadBeanDefinitions</span><span style="color:#c0c0c0;letter-spacing:0.476px;">:125, XmlWebApplicationContext </span><span style="color:#c0c0c0;letter-spacing:0.619px;">{org.springframework.web.context.support}</span></div>
<div class="t" style="left:302px;top:767.6px;height:20px;line-height:20px;font-size:12px;"><span style="color:#ff9292;letter-spacing:0.497px;">loadBeanDefinitions</span><span style="color:#c0c0c0;letter-spacing:0.541px;">:94, XmlWebApplicationContext </span><span style="color:#c0c0c0;letter-spacing:0.631px;">{org.springframework.web.context.support}</span></div>
<div class="t" style="left:302px;top:787.6px;height:20px;line-height:20px;font-size:12px;"><span style="color:#ff9292;letter-spacing:0.462px;">refreshBeanFactory</span><span style="color:#c0c0c0;letter-spacing:0.45px;">:131, AbstractRefreshableApplicationContext </span><span style="color:#c0c0c0;letter-spacing:0.663px;">{org.springframework.context.support}</span></div>
<div class="t" style="left:302px;top:807.6px;height:20px;line-height:20px;font-size:12px;"><span style="color:#ff9292;letter-spacing:0.422px;">obtainFreshBeanFactory</span><span style="color:#c0c0c0;letter-spacing:0.54px;">:537, AbstractApplicationContext </span><span style="color:#c0c0c0;letter-spacing:0.652px;">{org.springframework.context.support}</span></div>
<div class="t" style="left:302px;top:827.6px;height:20px;line-height:20px;font-size:12px;"><span style="color:#ff9292;letter-spacing:0.549px;">refresh</span><span style="color:#c0c0c0;letter-spacing:0.525px;">:451, AbstractApplicationContext </span><span style="color:#c0c0c0;letter-spacing:0.646px;">{org.springframework.context.support}</span></div>
<div class="t" style="left:302px;top:847.6px;height:20px;line-height:20px;font-size:12px;"><span style="color:#ff9292;letter-spacing:0.553px;">configureAndRefreshWebApplicationContext</span><span style="color:#c0c0c0;letter-spacing:0.541px;">:383, ContextLoader </span><span style="color:#c0c0c0;letter-spacing:0.574px;">{org.springframework.web.context}</span></div>
<div class="t" style="left:302px;top:867.6px;height:20px;line-height:20px;font-size:12px;"><span style="color:#ff9292;letter-spacing:0.554px;">initWebApplicationContext</span><span style="color:#c0c0c0;letter-spacing:0.501px;">:283, ContextLoader </span><span style="color:#c0c0c0;letter-spacing:0.619px;">{org.springframework.web.context}</span></div>
<div class="t" style="left:302px;top:887.6px;height:20px;line-height:20px;font-size:12px;"><span style="color:#ff9292;letter-spacing:0.471px;">contextInitialized</span><span style="color:#c0c0c0;letter-spacing:0.379px;">:127, IrisContextLoaderListener </span><span style="color:#c0c0c0;letter-spacing:0.58px;">{org.springframework.web.context}</span></div>
<div class="t" style="left:302px;top:907.6px;height:20px;line-height:20px;font-size:12px;"><span style="color:#ff9292;letter-spacing:0.513px;">listenerStart</span><span style="color:#c0c0c0;letter-spacing:0.448px;">:5128, StandardContext </span><span style="color:#c0c0c0;letter-spacing:0.479px;">{org.apache.catalina.core}</span></div>
<div class="t" style="left:302px;top:927.6px;height:20px;line-height:20px;font-size:12px;"><span style="color:#ff9292;letter-spacing:0.487px;">startInternal</span><span style="color:#c0c0c0;letter-spacing:0.565px;">:5653, StandardContext </span><span style="color:#c0c0c0;letter-spacing:0.46px;">{org.apache.catalina.core}</span></div>
<div class="b" style="left:1199px;top:429px;width:8px;height:134px;background:#5c5e60;border-radius:4px"></div>
<div class="b" style="left:1210px;top:399px;width:1px;height:552px;background:#35383a;"></div>
<div class="b" style="left:1235px;top:426px;width:1px;height:525px;background:#35383a;"></div>
<div class="b" style="left:1212px;top:425px;width:420px;height:1px;background:#35383a;"></div>
<div class="t" style="left:1224px;top:402.6px;height:20px;line-height:20px;font-size:12px;color:#c0c0c0;letter-spacing:-0.516px;-webkit-text-stroke:0.1px;">Variables</div>
<svg class="b" style="left:1215.5px;top:431.5px;" width="15" height="15" viewBox="0 0 16 16"><path d="M8 2V14M2 8H14" stroke="#b4b6b8" stroke-width="1.9"/></svg>
<svg class="b" style="left:1215.5px;top:457.5px;" width="15" height="15" viewBox="0 0 16 16"><path d="M2 8H14" stroke="#6c6e70" stroke-width="1.9"/></svg>
<svg class="b" style="left:1215.5px;top:483.5px;" width="15" height="15" viewBox="0 0 16 16"><path d="M1.4 11.2L8 4.8L14.6 11.2Z" fill="#6c6e70"/></svg>
<svg class="b" style="left:1215.5px;top:509.5px;" width="15" height="15" viewBox="0 0 16 16"><path d="M1.4 4.8L8 11.2L14.6 4.8Z" fill="#6c6e70"/></svg>
<svg class="b" style="left:1216.3px;top:535.5px;" width="14" height="14" viewBox="0 0 16 16"><path d="M1.4 1H11V3H3.4V12H1.4Z" fill="#6c6e70"/><rect x="5" y="4.6" width="9.8" height="10.6" fill="#6c6e70"/><path d="M6.8 7.6H13M6.8 9.9H13M6.8 12.2H13" stroke="#44484a" stroke-width="0.9"/></svg>
<div class="b" style="left:1212px;top:558px;width:22px;height:22px;background:#5c6164;border-radius:3px"></div>
<svg class="b" style="left:1214.0px;top:560.0px;" width="18" height="18" viewBox="0 0 16 16"><ellipse cx="4.4" cy="8.6" rx="3.1" ry="2.9" fill="none" stroke="#b4b6b8" stroke-width="1.6"/><ellipse cx="11.6" cy="8.6" rx="3.1" ry="2.9" fill="none" stroke="#b4b6b8" stroke-width="1.6"/><path d="M2.6 6.2H13.4" stroke="#b4b6b8" stroke-width="1.4"/></svg>
<div class="clip" style="left:1236px;top:427px;width:395px;height:524px">
<svg class="b" style="left:24px;top:2px" width="16" height="16" viewBox="0 0 16 16"><circle cx="8" cy="8" r="6.2" fill="#c75450"/><rect x="7.1" y="4" width="1.9" height="4.8" fill="#44484a"/><rect x="7.1" y="10" width="1.9" height="1.9" fill="#44484a"/></svg>
<div class="t" style="left:44px;top:0.6000000000000227px;height:20px;line-height:20px"><span style="color:#ff9292;letter-spacing:0.597px;">resultCode</span><span style="color:#c0c0c0;letter-spacing:0.238px;"> = </span><span style="color:#ff6b68;letter-spacing:0.485px;">Cannot find local variable 'resultCode'</span></div>
<svg class="b" style="left:24px;top:22px" width="16" height="16" viewBox="0 0 16 16"><circle cx="8" cy="8" r="6.2" fill="#c75450"/><rect x="7.1" y="4" width="1.9" height="4.8" fill="#44484a"/><rect x="7.1" y="10" width="1.9" height="1.9" fill="#44484a"/></svg>
<div class="t" style="left:44px;top:20.600000000000023px;height:20px;line-height:20px"><span style="color:#ff9292;letter-spacing:0.293px;">argsToUse</span><span style="color:#c0c0c0;letter-spacing:0.438px;"> = </span><span style="color:#ff6b68;letter-spacing:0.394px;">Cannot find local variable 'argsToUse'</span></div>
<svg class="b" style="left:3.599999999999909px;top:43px" width="14" height="14" viewBox="0 0 16 16"><path d="M5.8 3.4L10.4 8L5.8 12.6" fill="none" stroke="#b4b6b8" stroke-width="1.3"/></svg>
<svg class="b" style="left:24px;top:42px" width="16" height="16" viewBox="0 0 16 16"><rect x="2.6" y="2.2" width="10.6" height="2.6" fill="#c9983f"/><rect x="2.6" y="6.7" width="10.6" height="2.6" fill="#c9983f"/><rect x="2.6" y="11.2" width="10.6" height="2.6" fill="#c9983f"/></svg>
<div class="t" style="left:44px;top:40.60000000000002px;height:20px;line-height:20px"><span style="color:#ff9292;letter-spacing:0.578px;">this</span><span style="color:#c0c0c0;letter-spacing:0.238px;"> = </span><span style="color:#8c8c8c;letter-spacing:0.514px;">{DefaultBeanDefinitionDocumentReader@3214}</span></div>
<svg class="b" style="left:3.599999999999909px;top:63px" width="14" height="14" viewBox="0 0 16 16"><path d="M5.8 3.4L10.4 8L5.8 12.6" fill="none" stroke="#b4b6b8" stroke-width="1.3"/></svg>
<svg class="b" style="left:24px;top:62px" width="16" height="16" viewBox="0 0 16 16"><circle cx="8" cy="8" r="7" fill="#c9983f"/><path d="M6.3 13V5.2M6.3 7.4A2.3 2.3 0 1 1 6.3 9.8" fill="none" stroke="#4a3b1e" stroke-width="1"/></svg>
<div class="t" style="left:44px;top:60.60000000000002px;height:20px;line-height:20px"><span style="color:#ff9292;letter-spacing:0.828px;">root</span><span style="color:#c0c0c0;letter-spacing:0.004px;"> = </span><span style="color:#8c8c8c;letter-spacing:0.477px;">{DeferredElementNSImpl@3215}</span><span style="color:#cfcfcf;letter-spacing:0.589px;"> "[beans: null]"</span></div>
<svg class="b" style="left:3.599999999999909px;top:83px" width="14" height="14" viewBox="0 0 16 16"><path d="M5.8 3.4L10.4 8L5.8 12.6" fill="none" stroke="#b4b6b8" stroke-width="1.3"/></svg>
<svg class="b" style="left:24px;top:82px" width="16" height="16" viewBox="0 0 16 16"><circle cx="8" cy="8" r="7" fill="#c9983f"/><path d="M6.3 13V5.2M6.3 7.4A2.3 2.3 0 1 1 6.3 9.8" fill="none" stroke="#4a3b1e" stroke-width="1"/></svg>
<div class="t" style="left:44px;top:80.60000000000002px;height:20px;line-height:20px"><span style="color:#ff9292;letter-spacing:0.532px;">delegate</span><span style="color:#c0c0c0;letter-spacing:0.337px;"> = </span><span style="color:#8c8c8c;letter-spacing:0.448px;">{BeanDefinitionParserDelegate@3218}</span></div>
<svg class="b" style="left:3.599999999999909px;top:103px" width="14" height="14" viewBox="0 0 16 16"><path d="M5.8 3.4L10.4 8L5.8 12.6" fill="none" stroke="#b4b6b8" stroke-width="1.3"/></svg>
<svg class="b" style="left:24px;top:102px" width="16" height="16" viewBox="0 0 16 16"><rect x="2.6" y="2.2" width="10.6" height="2.6" fill="#c9983f"/><rect x="2.6" y="6.7" width="10.6" height="2.6" fill="#c9983f"/><rect x="2.6" y="11.2" width="10.6" height="2.6" fill="#c9983f"/></svg>
<div class="t" style="left:44px;top:100.60000000000002px;height:20px;line-height:20px"><span style="color:#ff9292;letter-spacing:0.328px;">nl</span><span style="color:#c0c0c0;letter-spacing:0.404px;"> = </span><span style="color:#8c8c8c;letter-spacing:0.462px;">{DeferredElementNSImpl@3215}</span><span style="color:#cfcfcf;letter-spacing:0.589px;"> "[beans: null]"</span></div>
<svg class="b" style="left:24px;top:122px" width="16" height="16" viewBox="0 0 16 16"><rect x="2" y="2.4" width="12" height="11.2" fill="#40a0c0"/><text x="8" y="11" font-family="Liberation Sans, sans-serif" font-size="7.5" font-weight="400" fill="#1f3a45" text-anchor="middle">01</text></svg>
<div class="t" style="left:44px;top:120.60000000000002px;height:20px;line-height:20px"><span style="color:#ff9292;">i</span><span style="color:#c0c0c0;"> = 7</span></div>
<svg class="b" style="left:3.599999999999909px;top:143px" width="14" height="14" viewBox="0 0 16 16"><path d="M5.8 3.4L10.4 8L5.8 12.6" fill="none" stroke="#b4b6b8" stroke-width="1.3"/></svg>
<svg class="b" style="left:24px;top:142px" width="16" height="16" viewBox="0 0 16 16"><rect x="2.6" y="2.2" width="10.6" height="2.6" fill="#c9983f"/><rect x="2.6" y="6.7" width="10.6" height="2.6" fill="#c9983f"/><rect x="2.6" y="11.2" width="10.6" height="2.6" fill="#c9983f"/></svg>
<div class="t" style="left:44px;top:140.60000000000002px;height:20px;line-height:20px"><span style="color:#ff9292;letter-spacing:0.574px;">node</span><span style="color:#c0c0c0;letter-spacing:0.337px;"> = </span><span style="color:#8c8c8c;letter-spacing:0.534px;">{DeferredElementNSImpl@3225}</span><span style="color:#cfcfcf;letter-spacing:0.72px;"> "[sec:global-method-security: null]"</span></div>
<svg class="b" style="left:3.599999999999909px;top:163px" width="14" height="14" viewBox="0 0 16 16"><path d="M5.8 3.4L10.4 8L5.8 12.6" fill="none" stroke="#b4b6b8" stroke-width="1.3"/></svg>
<svg class="b" style="left:24px;top:162px" width="16" height="16" viewBox="0 0 16 16"><rect x="2.6" y="2.2" width="10.6" height="2.6" fill="#c9983f"/><rect x="2.6" y="6.7" width="10.6" height="2.6" fill="#c9983f"/><rect x="2.6" y="11.2" width="10.6" height="2.6" fill="#c9983f"/></svg>
<div class="t" style="left:44px;top:160.60000000000002px;height:20px;line-height:20px"><span style="color:#ff9292;letter-spacing:0.328px;">ele</span><span style="color:#c0c0c0;letter-spacing:0.271px;"> = </span><span style="color:#8c8c8c;letter-spacing:0.52px;">{DeferredElementNSImpl@3225}</span><span style="color:#cfcfcf;letter-spacing:0.786px;"> "[sec:global-method-security: null]"</span></div>
</div>
<div class="b" style="left:1631px;top:398px;width:1px;height:553px;background:#35383a;"></div>
<div class="clip" style="left:1632px;top:398px;width:130px;height:553px">
<div class="t" style="left:13px;top:4.600000000000023px;height:20px;line-height:20px;font-size:12px;color:#c0c0c0;-webkit-text-stroke:0.1px;letter-spacing:-0.391px;">Memory</div>
<div class="t" style="left:79px;top:4.600000000000023px;height:20px;line-height:20px;font-size:12px;color:#c0c0c0;-webkit-text-stroke:0.1px;letter-spacing:-0.588px;">Overhead</div>
<div class="b" style="left:0;top:27px;width:130px;height:1px;background:#35383a"></div>
<div class="b" style="left:0;top:26px;width:67px;height:2px;background:#7a8084"></div>
<div class="b" style="left:0;top:58px;width:130px;height:24px;background:#4a4e50"></div>
<div class="b" style="left:0;top:82px;width:130px;height:1px;background:#3a3d3f"></div>
<div class="b" style="left:3px;top:31px;width:140px;height:22px;border:1px solid #656869;border-radius:4px;background:#4c5052"></div>
<svg class="b" style="left:10px;top:36px" width="15" height="15" viewBox="0 0 16 16"><circle cx="6.8" cy="6.8" r="4.3" fill="none" stroke="#8b8e90" stroke-width="1.3"/><path d="M10 10L14 14" stroke="#8b8e90" stroke-width="1.4"/></svg>
<div class="t" style="left:8px;top:60.60000000000002px;height:20px;line-height:20px;font-size:12px;color:#c0c0c0;-webkit-text-stroke:0.1px;letter-spacing:-0.803px;">Class</div>
<div class="b" style="left:55px;top:59px;width:1px;height:22px;background:#323537"></div>
<div class="t" style="left:64px;top:60.60000000000002px;height:20px;line-height:20px;font-size:12px;color:#c0c0c0;-webkit-text-stroke:0.1px;letter-spacing:-0.406px;">Count</div>
<div class="t" style="left:12px;top:241.60000000000002px;height:20px;line-height:20px;font-size:12px;color:#8c8c8c;-webkit-text-stroke:0.1px;letter-spacing:0.435px;">No classes loaded. </div>
<div class="t" style="left:125px;top:241.60000000000002px;height:20px;line-height:20px;font-size:12px;color:#589df6;-webkit-text-stroke:0.1px;">Load classes</div>
</div>
</div>
</body></html>
